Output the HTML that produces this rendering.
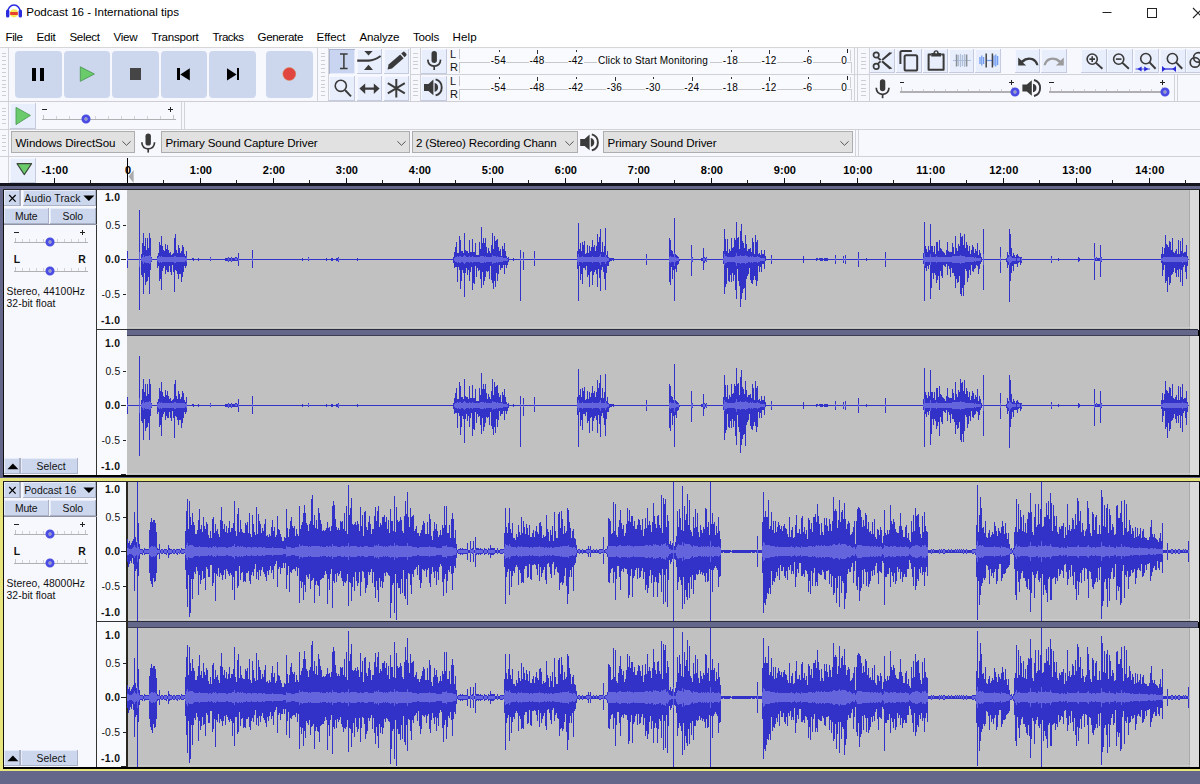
<!DOCTYPE html>
<html lang="en">
<head>
<meta charset="utf-8">
<title>Podcast 16 - International tips</title>
<style>
html,body{margin:0;padding:0;overflow:hidden}
body{width:1200px;height:784px;position:relative;overflow:hidden;background:#f7f8fd;
 font-family:"Liberation Sans",sans-serif;color:#000;font-size:12px}
.a{position:absolute}
.t{position:absolute;white-space:nowrap;line-height:1;transform-origin:0 0}
#title{left:0;top:0;width:1200px;height:26px;background:#fff}
#menu{left:0;top:26px;width:1200px;height:21px;background:#fff}
.hl{position:absolute;height:1px;background:#d2d3d8}
.vl{position:absolute;width:1px;background:#d2d3d8}
.grab{position:absolute;width:6px;
 background:repeating-linear-gradient(to bottom,#c9cacf 0,#c9cacf 1px,rgba(255,255,255,0) 1px,rgba(255,255,255,0) 3.85px)}
.big{position:absolute;top:50.5px;width:46.5px;height:47px;background:#ccd7ee;border-radius:4px}
.tool{position:absolute;width:25px;height:25px;background:#e8eefc;
 box-shadow:inset -1px -1px 0 #c4cbe0, inset 1px 1px 0 #f4f7ff}
.tool.sel{background:#c9d5f0;box-shadow:inset 1px 1px 0 #aab4d0, inset -1px -1px 0 #e4eafa}
.combo{position:absolute;top:131.3px;height:19.9px;background:#e1e1e1;border:1px solid #adadad;box-sizing:content-box}
.tbtn{position:absolute;background:#ccd7ee;box-shadow:inset -1px -1px 0 #aab2c8, inset 1px 1px 0 #e6ecfa}
svg{position:absolute;overflow:visible}
#app{position:absolute;left:0;top:0;width:1200px;height:784px;overflow:hidden}
</style>
</head>
<body>
<div id="app">
<div class="a" id="title"></div><div class="a" id="menu"></div>
<svg style="left:5px;top:3px" width="18" height="16" viewBox="0 0 18 16"><ellipse cx="9" cy="10.3" rx="4" ry="4.1" fill="#f6e85a"/>
<rect x="5.2" y="9" width="7.6" height="3" fill="#e8402c"/>
<path d="M2.6 9.5 A6.4 7.5 0 0 1 15.4 9.5" fill="none" stroke="#2b2be0" stroke-width="1.5"/>
<rect x="1" y="6.6" width="3.4" height="8" rx="1.6" fill="#2b2be0"/>
<rect x="13.6" y="6.6" width="3.4" height="8" rx="1.6" fill="#2b2be0"/></svg>
<span class="t" id="t1" style="left:26.2px;top:5.94px;font-size:11.6px;letter-spacing:-0.019px">Podcast 16 - International tips</span>
<svg style="left:1095px;top:0px" width="105" height="26" viewBox="0 0 105 26"><path d="M7.5 12.5H16.5" stroke="#222" stroke-width="1"/>
<rect x="52.5" y="8.5" width="9" height="9" fill="none" stroke="#222" stroke-width="1"/>
<path d="M98 8L108 18M108 8L98 18" stroke="#222" stroke-width="1.1"/></svg>
<span class="t" id="t2" style="left:5.5px;top:31.24px;font-size:11.6px;letter-spacing:-0.422px">File</span>
<span class="t" id="t3" style="left:36.5px;top:31.24px;font-size:11.6px;letter-spacing:-0.246px">Edit</span>
<span class="t" id="t4" style="left:69.5px;top:31.24px;font-size:11.6px;letter-spacing:-0.372px">Select</span>
<span class="t" id="t5" style="left:113.5px;top:31.24px;font-size:11.6px;letter-spacing:-0.28px">View</span>
<span class="t" id="t6" style="left:151.5px;top:31.24px;font-size:11.6px;letter-spacing:-0.243px">Transport</span>
<span class="t" id="t7" style="left:212.5px;top:31.24px;font-size:11.6px;letter-spacing:-0.56px">Tracks</span>
<span class="t" id="t8" style="left:257.5px;top:31.24px;font-size:11.6px;letter-spacing:-0.355px">Generate</span>
<span class="t" id="t9" style="left:316.5px;top:31.24px;font-size:11.6px;letter-spacing:-0.073px">Effect</span>
<span class="t" id="t10" style="left:359.5px;top:31.24px;font-size:11.6px;letter-spacing:-0.207px">Analyze</span>
<span class="t" id="t11" style="left:413px;top:31.24px;font-size:11.6px;letter-spacing:-0.216px">Tools</span>
<span class="t" id="t12" style="left:452.5px;top:31.24px;font-size:11.6px;letter-spacing:0.085px">Help</span>
<div class="hl" style="left:0;top:46.8px;width:1200px;height:1.3px;background:#d6d6d9"></div>
<div class="hl" style="left:0;top:100.8px;width:1200px;height:1.4px;background:#cfcfd3"></div>
<div class="hl" style="left:0;top:128.6px;width:1200px;height:1.3px;background:#d2d2d6"></div>
<div class="hl" style="left:0;top:155.7px;width:1200px;height:1.3px;background:#d2d2d6"></div>
<div class="hl" style="left:410px;top:74px;width:790px"></div>
<div class="a" style="left:2.3px;top:52.6px;width:4px;height:1px;background:#cdcdd2"></div>
<div class="a" style="left:2.3px;top:56.47px;width:4px;height:1px;background:#cdcdd2"></div>
<div class="a" style="left:2.3px;top:60.34px;width:4px;height:1px;background:#cdcdd2"></div>
<div class="a" style="left:2.3px;top:64.21px;width:4px;height:1px;background:#cdcdd2"></div>
<div class="a" style="left:2.3px;top:68.08px;width:4px;height:1px;background:#cdcdd2"></div>
<div class="a" style="left:2.3px;top:71.95px;width:4px;height:1px;background:#cdcdd2"></div>
<div class="a" style="left:2.3px;top:75.82px;width:4px;height:1px;background:#cdcdd2"></div>
<div class="a" style="left:2.3px;top:79.69px;width:4px;height:1px;background:#cdcdd2"></div>
<div class="a" style="left:2.3px;top:83.56px;width:4px;height:1px;background:#cdcdd2"></div>
<div class="a" style="left:2.3px;top:87.43px;width:4px;height:1px;background:#cdcdd2"></div>
<div class="a" style="left:2.3px;top:91.3px;width:4px;height:1px;background:#cdcdd2"></div>
<div class="a" style="left:2.3px;top:95.17px;width:4px;height:1px;background:#cdcdd2"></div>
<div class="vl" style="left:8px;top:47px;height:54px"></div>
<div class="big" style="left:15px"></div>
<div class="big" style="left:63.5px"></div>
<div class="big" style="left:112px"></div>
<div class="big" style="left:160.7px"></div>
<div class="big" style="left:209.3px"></div>
<div class="big" style="left:266px"></div>
<div class="a" style="left:32px;top:67.5px;width:4.4px;height:13px;background:#000"></div>
<div class="a" style="left:39.6px;top:67.5px;width:4.4px;height:13px;background:#000"></div>
<svg style="left:78px;top:64px" width="20" height="20" viewBox="0 0 20 20"><path d="M2.3 2.8L16.4 10L2.3 17.3Z" fill="#6acb6a" stroke="#4f9a58" stroke-width="0.9" stroke-linejoin="round"/></svg>
<div class="a" style="left:130px;top:68px;width:11.2px;height:11.6px;background:#454545"></div>
<div class="a" style="left:177.3px;top:68.2px;width:2.3px;height:12.2px;background:#000"></div>
<svg style="left:170px;top:64px" width="24" height="20" viewBox="0 0 24 20"><path d="M19.8 4.2V16.6L10.3 10.4Z" fill="#000"/></svg>
<div class="a" style="left:236.7px;top:68.2px;width:2.3px;height:12.2px;background:#000"></div>
<svg style="left:220px;top:64px" width="24" height="20" viewBox="0 0 24 20"><path d="M7 4.2V16.6L16.6 10.4Z" fill="#000"/></svg>
<svg style="left:280px;top:64px" width="20" height="20" viewBox="0 0 20 20"><circle cx="9.3" cy="10" r="6.5" fill="#e0463f" stroke="#d98f5a" stroke-width="0.5"/></svg>
<div class="vl" style="left:317px;top:47px;height:54px"></div>
<div class="a" style="left:320.5px;top:52.6px;width:4.6px;height:1px;background:#cdcdd2"></div>
<div class="a" style="left:320.5px;top:56.47px;width:4.6px;height:1px;background:#cdcdd2"></div>
<div class="a" style="left:320.5px;top:60.34px;width:4.6px;height:1px;background:#cdcdd2"></div>
<div class="a" style="left:320.5px;top:64.21px;width:4.6px;height:1px;background:#cdcdd2"></div>
<div class="a" style="left:320.5px;top:68.08px;width:4.6px;height:1px;background:#cdcdd2"></div>
<div class="a" style="left:320.5px;top:71.95px;width:4.6px;height:1px;background:#cdcdd2"></div>
<div class="a" style="left:320.5px;top:75.82px;width:4.6px;height:1px;background:#cdcdd2"></div>
<div class="a" style="left:320.5px;top:79.69px;width:4.6px;height:1px;background:#cdcdd2"></div>
<div class="a" style="left:320.5px;top:83.56px;width:4.6px;height:1px;background:#cdcdd2"></div>
<div class="a" style="left:320.5px;top:87.43px;width:4.6px;height:1px;background:#cdcdd2"></div>
<div class="a" style="left:320.5px;top:91.3px;width:4.6px;height:1px;background:#cdcdd2"></div>
<div class="a" style="left:320.5px;top:95.17px;width:4.6px;height:1px;background:#cdcdd2"></div>
<div class="vl" style="left:327.5px;top:47px;height:54px"></div>
<div class="tool sel" style="left:329.25px;top:48.5px;width:25.5px"></div>
<div class="tool" style="left:356.5px;top:48.5px;width:25.5px"></div>
<div class="tool" style="left:383.75px;top:48.5px;width:25.5px"></div>
<div class="tool" style="left:329.25px;top:75.5px;width:25.5px"></div>
<div class="tool" style="left:356.5px;top:75.5px;width:25.5px"></div>
<div class="tool" style="left:383.75px;top:75.5px;width:25.5px"></div>
<svg style="left:329px;top:48px" width="26" height="26" viewBox="0 0 26 26"><path d="M11 5.9H18.6M11 20.6H18.6M14.9 5.9V20.6" stroke="#3a3a3a" stroke-width="1.5" fill="none"/></svg>
<svg style="left:356px;top:48px" width="27" height="26" viewBox="0 0 27 26"><path d="M8.3 3H16.7L12.5 7.6Z M8 22H17L12.5 16.8Z" fill="#3a3a3a"/>
<path d="M1.2 12.6H12.5C17 12.6 20.5 11 24.6 8" stroke="#3a3a3a" stroke-width="2.1" fill="none"/></svg>
<svg style="left:383px;top:48px" width="27" height="26" viewBox="0 0 27 26"><path d="M4.6 21.6L5.6 16.6L17.2 6.4L20.6 10.2L9 20.6Z" fill="#3a3a3a"/>
<path d="M18.2 5.4L20 3.9Q21 3.2 21.9 4.2L23.3 5.8Q24 6.9 23.1 7.7L21.5 9.2Z" fill="#3a3a3a"/></svg>
<svg style="left:329px;top:75px" width="27" height="26" viewBox="0 0 27 26"><circle cx="11.8" cy="10.8" r="5.6" fill="none" stroke="#3a3a3a" stroke-width="1.6"/><path d="M16 15L22 21.4" stroke="#3a3a3a" stroke-width="1.9"/></svg>
<svg style="left:356px;top:75px" width="27" height="26" viewBox="0 0 27 26"><path d="M3.4 13.6L9.2 8.4V12.5H17.8V8.4L23.6 13.6L17.8 18.9V14.8H9.2V18.9Z" fill="#3a3a3a"/></svg>
<svg style="left:383px;top:75px" width="27" height="26" viewBox="0 0 27 26"><path d="M13.3 4V22.4M4.8 8.2L21.8 18.4M21.8 8.2L4.8 18.4" stroke="#3a3a3a" stroke-width="2" fill="none"/></svg>
<div class="vl" style="left:410px;top:47px;height:54px"></div>
<div class="a" style="left:413.4px;top:52.8px;width:4.6px;height:1px;background:#cdcdd2"></div>
<div class="a" style="left:413.4px;top:56.67px;width:4.6px;height:1px;background:#cdcdd2"></div>
<div class="a" style="left:413.4px;top:60.54px;width:4.6px;height:1px;background:#cdcdd2"></div>
<div class="a" style="left:413.4px;top:64.41px;width:4.6px;height:1px;background:#cdcdd2"></div>
<div class="a" style="left:413.4px;top:68.28px;width:4.6px;height:1px;background:#cdcdd2"></div>
<div class="vl" style="left:420px;top:47.5px;height:26px"></div>
<div class="tool" style="left:421px;top:48.5px;width:26.4px"></div>
<span class="t" id="t13" style="left:450px;top:48.97px;font-size:11px;color:#111">L</span>
<span class="t" id="t14" style="left:450px;top:62.07px;font-size:11px;color:#111">R</span>
<div class="a" style="left:458.5px;top:48.5px;width:391px;height:24.5px;background:#f9fafe"></div>
<div class="vl" style="left:458.5px;top:48.5px;height:10.5px;background:#c6c6ca"></div>
<div class="vl" style="left:458.5px;top:61.5px;height:11px;background:#c6c6ca"></div>
<div class="hl" style="left:458.5px;top:61.5px;width:392px;background:#c9c9cc"></div>
<div class="vl" style="left:849.5px;top:49.5px;height:11px;background:#d0d0d4"></div>
<div class="vl" style="left:851px;top:61.5px;height:11px;background:#d0d0d4"></div>
<div class="a" style="left:498.5px;top:49.5px;width:1px;height:2.6px;background:#333"></div>
<span class="t" id="t15" style="left:490.4px;top:55.96px;font-size:10px;background:#f9fafe;padding:0 0.4px;letter-spacing:0.255px">-54</span>
<div class="a" style="left:537.17px;top:49.5px;width:1px;height:4px;background:#333"></div>
<span class="t" id="t16" style="left:529.07px;top:55.96px;font-size:10px;background:#f9fafe;padding:0 0.4px;letter-spacing:0.255px">-48</span>
<div class="a" style="left:575.84px;top:49.5px;width:1px;height:2.6px;background:#333"></div>
<span class="t" id="t17" style="left:567.74px;top:55.96px;font-size:10px;background:#f9fafe;padding:0 0.4px;letter-spacing:0.255px">-42</span>
<div class="a" style="left:730.52px;top:49.5px;width:1px;height:2.6px;background:#333"></div>
<span class="t" id="t18" style="left:722.42px;top:55.96px;font-size:10px;background:#f9fafe;padding:0 0.4px;letter-spacing:0.255px">-18</span>
<div class="a" style="left:769.19px;top:49.5px;width:1px;height:4px;background:#333"></div>
<span class="t" id="t19" style="left:761.09px;top:55.96px;font-size:10px;background:#f9fafe;padding:0 0.4px;letter-spacing:0.255px">-12</span>
<div class="a" style="left:807.86px;top:49.5px;width:1px;height:2.6px;background:#333"></div>
<span class="t" id="t20" style="left:802.56px;top:55.96px;font-size:10px;background:#f9fafe;padding:0 0.4px;letter-spacing:0.356px">-6</span>
<div class="a" style="left:846.83px;top:48.8px;width:1.6px;height:4.6px;background:#222"></div>
<span class="t" id="t21" style="left:840.83px;top:55.96px;font-size:10px;background:#f9fafe;padding:0 0.4px">0</span>
<div class="a" style="left:413.4px;top:79.8px;width:4.6px;height:1px;background:#cdcdd2"></div>
<div class="a" style="left:413.4px;top:83.67px;width:4.6px;height:1px;background:#cdcdd2"></div>
<div class="a" style="left:413.4px;top:87.54px;width:4.6px;height:1px;background:#cdcdd2"></div>
<div class="a" style="left:413.4px;top:91.41px;width:4.6px;height:1px;background:#cdcdd2"></div>
<div class="a" style="left:413.4px;top:95.28px;width:4.6px;height:1px;background:#cdcdd2"></div>
<div class="vl" style="left:420px;top:74.5px;height:26px"></div>
<div class="tool" style="left:421px;top:75.5px;width:26.4px"></div>
<span class="t" id="t22" style="left:450px;top:75.97px;font-size:11px;color:#111">L</span>
<span class="t" id="t23" style="left:450px;top:89.07px;font-size:11px;color:#111">R</span>
<div class="a" style="left:458.5px;top:75.5px;width:391px;height:24.5px;background:#f9fafe"></div>
<div class="vl" style="left:458.5px;top:75.5px;height:10.5px;background:#c6c6ca"></div>
<div class="vl" style="left:458.5px;top:88.5px;height:11px;background:#c6c6ca"></div>
<div class="hl" style="left:458.5px;top:88.5px;width:392px;background:#c9c9cc"></div>
<div class="vl" style="left:849.5px;top:76.5px;height:11px;background:#d0d0d4"></div>
<div class="vl" style="left:851px;top:88.5px;height:11px;background:#d0d0d4"></div>
<div class="a" style="left:498.5px;top:76.5px;width:1px;height:2.6px;background:#333"></div>
<span class="t" id="t24" style="left:490.4px;top:82.96px;font-size:10px;background:#f9fafe;padding:0 0.4px;letter-spacing:0.255px">-54</span>
<div class="a" style="left:537.17px;top:76.5px;width:1px;height:4px;background:#333"></div>
<span class="t" id="t25" style="left:529.07px;top:82.96px;font-size:10px;background:#f9fafe;padding:0 0.4px;letter-spacing:0.255px">-48</span>
<div class="a" style="left:575.84px;top:76.5px;width:1px;height:2.6px;background:#333"></div>
<span class="t" id="t26" style="left:567.74px;top:82.96px;font-size:10px;background:#f9fafe;padding:0 0.4px;letter-spacing:0.255px">-42</span>
<div class="a" style="left:614.51px;top:76.5px;width:1px;height:4px;background:#333"></div>
<span class="t" id="t27" style="left:606.41px;top:82.96px;font-size:10px;background:#f9fafe;padding:0 0.4px;letter-spacing:0.255px">-36</span>
<div class="a" style="left:653.18px;top:76.5px;width:1px;height:2.6px;background:#333"></div>
<span class="t" id="t28" style="left:645.08px;top:82.96px;font-size:10px;background:#f9fafe;padding:0 0.4px;letter-spacing:0.255px">-30</span>
<div class="a" style="left:691.85px;top:76.5px;width:1px;height:4px;background:#333"></div>
<span class="t" id="t29" style="left:683.75px;top:82.96px;font-size:10px;background:#f9fafe;padding:0 0.4px;letter-spacing:0.255px">-24</span>
<div class="a" style="left:730.52px;top:76.5px;width:1px;height:2.6px;background:#333"></div>
<span class="t" id="t30" style="left:722.42px;top:82.96px;font-size:10px;background:#f9fafe;padding:0 0.4px;letter-spacing:0.255px">-18</span>
<div class="a" style="left:769.19px;top:76.5px;width:1px;height:4px;background:#333"></div>
<span class="t" id="t31" style="left:761.09px;top:82.96px;font-size:10px;background:#f9fafe;padding:0 0.4px;letter-spacing:0.255px">-12</span>
<div class="a" style="left:807.86px;top:76.5px;width:1px;height:2.6px;background:#333"></div>
<span class="t" id="t32" style="left:802.56px;top:82.96px;font-size:10px;background:#f9fafe;padding:0 0.4px;letter-spacing:0.356px">-6</span>
<div class="a" style="left:846.83px;top:75.8px;width:1.6px;height:4.6px;background:#222"></div>
<span class="t" id="t33" style="left:840.83px;top:82.96px;font-size:10px;background:#f9fafe;padding:0 0.4px">0</span>
<span class="t" id="t34" style="left:596.5px;top:56.16px;font-size:10px;background:#f9fafe;padding:0 1.5px;letter-spacing:0.154px">Click to Start Monitoring</span>
<svg style="left:421px;top:48px" width="27" height="26" viewBox="0 0 27 26"><rect x="10.5" y="3" width="5.4" height="12" rx="2.7" fill="#3a3a3a"/><path d="M6.8 11.6Q7.2 18 13.2 18.2Q19.2 18 19.6 11.6" fill="none" stroke="#3a3a3a" stroke-width="1.7"/><path d="M13.2 18V22" stroke="#3a3a3a" stroke-width="1.7"/></svg>
<svg style="left:421px;top:75px" width="27" height="26" viewBox="0 0 27 26"><path d="M3 8.9H7.4L12.4 4.6V20.2L7.4 15.9H3Z" fill="#3a3a3a"/><path d="M13.6 8.1A4.4 4.4 0 0 1 13.6 16.7Z" fill="#3a3a3a"/><path d="M14.6 4.4A8.3 8.3 0 0 1 14.6 20.4" fill="none" stroke="#3a3a3a" stroke-width="1.9"/></svg>
<div class="vl" style="left:854px;top:47px;height:54px"></div>
<div class="vl" style="left:857px;top:47px;height:54px"></div>
<div class="a" style="left:861.4px;top:52.8px;width:4.6px;height:1px;background:#cdcdd2"></div>
<div class="a" style="left:861.4px;top:56.67px;width:4.6px;height:1px;background:#cdcdd2"></div>
<div class="a" style="left:861.4px;top:60.54px;width:4.6px;height:1px;background:#cdcdd2"></div>
<div class="a" style="left:861.4px;top:64.41px;width:4.6px;height:1px;background:#cdcdd2"></div>
<div class="a" style="left:861.4px;top:68.28px;width:4.6px;height:1px;background:#cdcdd2"></div>
<div class="vl" style="left:868.5px;top:47px;height:27px"></div>
<div class="tool" style="left:870px;top:48.5px;width:25.4px;height:24.5px"></div>
<div class="tool" style="left:896.4px;top:48.5px;width:25.4px;height:24.5px"></div>
<div class="tool" style="left:922.6px;top:48.5px;width:25.4px;height:24.5px"></div>
<div class="tool" style="left:949px;top:48.5px;width:25.4px;height:24.5px"></div>
<div class="tool" style="left:975.2px;top:48.5px;width:25.4px;height:24.5px"></div>
<div class="tool" style="left:1015px;top:48.5px;width:25.4px;height:24.5px"></div>
<div class="tool" style="left:1041.2px;top:48.5px;width:25.4px;height:24.5px"></div>
<div class="tool" style="left:1081.2px;top:48.5px;width:25.4px;height:24.5px"></div>
<div class="tool" style="left:1107.4px;top:48.5px;width:25.4px;height:24.5px"></div>
<div class="tool" style="left:1134px;top:48.5px;width:25.4px;height:24.5px"></div>
<div class="tool" style="left:1160.2px;top:48.5px;width:25.4px;height:24.5px"></div>
<div class="tool" style="left:1186.4px;top:48.5px;width:25.4px;height:24.5px"></div>
<svg style="left:870px;top:48px" width="26" height="26" viewBox="0 0 26 26"><circle cx="6.2" cy="7" r="2.7" fill="none" stroke="#3a3a3a" stroke-width="1.7"/>
<circle cx="6.2" cy="18.4" r="2.7" fill="none" stroke="#3a3a3a" stroke-width="1.7"/>
<path d="M8.2 8.8L22.4 20.6L19.4 21.2L7.4 10.4Z M8.2 16.6L22.4 4.8L19.4 4.2L7.4 15Z" fill="#3a3a3a"/></svg>
<svg style="left:896px;top:48px" width="26" height="26" viewBox="0 0 26 26"><path d="M4.4 16V4.6Q4.4 3 6 3H15.8" fill="none" stroke="#3a3a3a" stroke-width="2"/>
<rect x="8.6" y="7.2" width="12.6" height="15.4" rx="1.6" fill="none" stroke="#3a3a3a" stroke-width="2"/></svg>
<svg style="left:922px;top:48px" width="26" height="26" viewBox="0 0 26 26"><path d="M9 6.6H6.6V21.8H21.6V6.6H19.2" fill="none" stroke="#3a3a3a" stroke-width="2" stroke-linejoin="round"/>
<path d="M9.2 8.6V5H11.4Q11.8 2.2 14.1 2.2Q16.4 2.2 16.8 5H19V8.6Z" fill="#3a3a3a"/><circle cx="14.1" cy="4.6" r="1" fill="#e8eefc"/></svg>
<svg style="left:949px;top:48px" width="26" height="26" viewBox="0 0 26 26"><path d="M4 12.5H22" stroke="#a9bfe0" stroke-width="1"/>
<path d="M9.5 7V18M11.5 6V19M13.5 7V18M15.5 6V19" stroke="#b0bfd8" stroke-width="1.2"/>
<path d="M7.6 6.6V18.6M17.6 6.6V18.6" stroke="#8a8f98" stroke-width="1.6"/></svg>
<svg style="left:975px;top:48px" width="26" height="26" viewBox="0 0 26 26"><path d="M5 9V16M6.8 7.5V17.5M8.6 9V16M19 7.5V17.5M20.8 6.5V18.5M22.6 8V17" stroke="#6f9cf0" stroke-width="1.3"/>
<path d="M12 12.5H17" stroke="#6f9cf0" stroke-width="1.2"/>
<path d="M11.2 5.6V19.4M17.4 5.6V19.4" stroke="#444" stroke-width="1.5"/></svg>
<svg style="left:1015px;top:48px" width="26" height="26" viewBox="0 0 26 26"><path d="M3.2 9.4V17.4H11.2L8 14.8Q12 10.6 17 12.2Q20.4 13.6 21.4 17.2H23.4Q22.4 11.8 17.6 10Q11.4 8 6.4 12.6Z" fill="#3a3a3a"/></svg>
<svg style="left:1041px;top:48px" width="26" height="26" viewBox="0 0 26 26"><path d="M22.8 9.4V17.4H14.8L18 14.8Q14 10.6 9 12.2Q5.6 13.6 4.6 17.2H2.6Q3.6 11.8 8.4 10Q14.6 8 19.6 12.6Z" fill="#9b9b9b"/></svg>
<svg style="left:1081px;top:48px" width="26" height="26" viewBox="0 0 26 26"><circle cx="11.2" cy="11.1" r="5.1" fill="none" stroke="#3a3a3a" stroke-width="1.6"/><path d="M14.974 14.874L21.4 20.8" stroke="#3a3a3a" stroke-width="2"/><path d="M8.4 11.1H14M11.2 8.3V13.9" stroke="#3a3a3a" stroke-width="1.6"/></svg>
<svg style="left:1107px;top:48px" width="26" height="26" viewBox="0 0 26 26"><circle cx="11.7" cy="11.1" r="5.1" fill="none" stroke="#3a3a3a" stroke-width="1.6"/><path d="M15.474 14.874L21.9 20.8" stroke="#3a3a3a" stroke-width="2"/><path d="M8.9 11.1H14.5" stroke="#3a3a3a" stroke-width="1.6"/></svg>
<svg style="left:1134px;top:48px" width="26" height="26" viewBox="0 0 26 26"><circle cx="11.8" cy="10.6" r="5.1" fill="none" stroke="#3a3a3a" stroke-width="1.6"/><path d="M15.574 14.374L21.6 20.8" stroke="#3a3a3a" stroke-width="2"/><path d="M3.4 21L7.6 18.4V23.6Z M14.4 21L10.2 18.4V23.6Z" fill="#2a2ad8"/><path d="M1.6 21H16" stroke="#2a2ad8" stroke-width="0.8"/></svg>
<svg style="left:1160px;top:48px" width="26" height="26" viewBox="0 0 26 26"><circle cx="12.4" cy="10.6" r="5.1" fill="none" stroke="#3a3a3a" stroke-width="1.6"/><path d="M16.174 14.374L22.2 20.8" stroke="#3a3a3a" stroke-width="2"/><path d="M2 18V24L5.6 21Z M16 18V24L12.4 21Z" fill="#2a2ad8"/><path d="M4 21H14" stroke="#2a2ad8" stroke-width="1.3"/></svg>
<svg style="left:1186px;top:48px" width="14" height="26" viewBox="0 0 14 26"><circle cx="12.4" cy="9.4" r="4.8" fill="none" stroke="#3a3a3a" stroke-width="1.7"/><circle cx="9" cy="14.4" r="4.8" fill="none" stroke="#3a3a3a" stroke-width="1.7"/></svg>
<div class="a" style="left:861.4px;top:79.8px;width:4.6px;height:1px;background:#cdcdd2"></div>
<div class="a" style="left:861.4px;top:83.67px;width:4.6px;height:1px;background:#cdcdd2"></div>
<div class="a" style="left:861.4px;top:87.54px;width:4.6px;height:1px;background:#cdcdd2"></div>
<div class="a" style="left:861.4px;top:91.41px;width:4.6px;height:1px;background:#cdcdd2"></div>
<div class="a" style="left:861.4px;top:95.28px;width:4.6px;height:1px;background:#cdcdd2"></div>
<div class="vl" style="left:868.5px;top:75px;height:26px"></div>
<svg style="left:869px;top:75px" width="27" height="26" viewBox="0 0 27 26"><rect x="10.9" y="4.2" width="5.4" height="12" rx="2.7" fill="#3a3a3a"/><path d="M7.2 12.8Q7.6 19.2 13.6 19.4Q19.6 19.2 20 12.8" fill="none" stroke="#3a3a3a" stroke-width="1.7"/><path d="M13.6 19.2V23.2" stroke="#3a3a3a" stroke-width="1.7"/></svg>
<div class="a" style="left:899.5px;top:91.4px;width:115.5px;height:1.4px;background:#b0b0b3"></div>
<div class="a" style="left:900.6px;top:87.1px;width:1px;height:4.2px;background:#c4c4c8"></div>
<div class="a" style="left:911.78px;top:88.9px;width:1px;height:2.4px;background:#d3d3d7"></div>
<div class="a" style="left:922.96px;top:88.9px;width:1px;height:2.4px;background:#d3d3d7"></div>
<div class="a" style="left:934.14px;top:88.9px;width:1px;height:2.4px;background:#d3d3d7"></div>
<div class="a" style="left:945.32px;top:88.9px;width:1px;height:2.4px;background:#d3d3d7"></div>
<div class="a" style="left:956.5px;top:88.9px;width:1px;height:2.4px;background:#d3d3d7"></div>
<div class="a" style="left:967.68px;top:88.9px;width:1px;height:2.4px;background:#d3d3d7"></div>
<div class="a" style="left:978.86px;top:88.9px;width:1px;height:2.4px;background:#d3d3d7"></div>
<div class="a" style="left:990.04px;top:88.9px;width:1px;height:2.4px;background:#d3d3d7"></div>
<div class="a" style="left:1001.22px;top:88.9px;width:1px;height:2.4px;background:#d3d3d7"></div>
<div class="a" style="left:1012.4px;top:87.1px;width:1px;height:4.2px;background:#c4c4c8"></div>
<div class="a" style="left:899.5px;top:81.6px;width:4.6px;height:1.1px;background:#222"></div>
<div class="a" style="left:1008.8px;top:81.6px;width:5px;height:1.1px;background:#222"></div>
<div class="a" style="left:1010.75px;top:79.6px;width:1.1px;height:5px;background:#222"></div>
<svg style="left:1008.8px;top:86px" width="12" height="12" viewBox="0 0 12 12"><circle cx="6" cy="6" r="3.1" fill="#b9bce0" stroke="#4a4ce4" stroke-width="2.9"/><circle cx="6" cy="6" r="1" fill="#8f93b0"/></svg>
<svg style="left:1019px;top:75px" width="27" height="26" viewBox="0 0 27 26"><path d="M3.4 9.5H7.8L12.8 5.2V20.8L7.8 16.5H3.4Z" fill="#3a3a3a"/><path d="M14 8.7A4.4 4.4 0 0 1 14 17.3Z" fill="#3a3a3a"/><path d="M15 5A8.3 8.3 0 0 1 15 21" fill="none" stroke="#3a3a3a" stroke-width="1.9"/></svg>
<div class="a" style="left:1049px;top:91.4px;width:116px;height:1.4px;background:#b0b0b3"></div>
<div class="a" style="left:1050.1px;top:87.1px;width:1px;height:4.2px;background:#c4c4c8"></div>
<div class="a" style="left:1061.33px;top:88.9px;width:1px;height:2.4px;background:#d3d3d7"></div>
<div class="a" style="left:1072.56px;top:88.9px;width:1px;height:2.4px;background:#d3d3d7"></div>
<div class="a" style="left:1083.79px;top:88.9px;width:1px;height:2.4px;background:#d3d3d7"></div>
<div class="a" style="left:1095.02px;top:88.9px;width:1px;height:2.4px;background:#d3d3d7"></div>
<div class="a" style="left:1106.25px;top:88.9px;width:1px;height:2.4px;background:#d3d3d7"></div>
<div class="a" style="left:1117.48px;top:88.9px;width:1px;height:2.4px;background:#d3d3d7"></div>
<div class="a" style="left:1128.71px;top:88.9px;width:1px;height:2.4px;background:#d3d3d7"></div>
<div class="a" style="left:1139.94px;top:88.9px;width:1px;height:2.4px;background:#d3d3d7"></div>
<div class="a" style="left:1151.17px;top:88.9px;width:1px;height:2.4px;background:#d3d3d7"></div>
<div class="a" style="left:1162.4px;top:87.1px;width:1px;height:4.2px;background:#c4c4c8"></div>
<div class="a" style="left:1049px;top:81.6px;width:4.6px;height:1.1px;background:#222"></div>
<div class="a" style="left:1159.8px;top:81.6px;width:5px;height:1.1px;background:#222"></div>
<div class="a" style="left:1161.75px;top:79.6px;width:1.1px;height:5px;background:#222"></div>
<svg style="left:1159.4px;top:86px" width="12" height="12" viewBox="0 0 12 12"><circle cx="6" cy="6" r="3.1" fill="#b9bce0" stroke="#4a4ce4" stroke-width="2.9"/><circle cx="6" cy="6" r="1" fill="#8f93b0"/></svg>
<div class="vl" style="left:1173.5px;top:75px;height:26px"></div>
<div class="vl" style="left:1176.5px;top:75px;height:26px"></div>
<div class="a" style="left:2.3px;top:107.6px;width:4px;height:1px;background:#cdcdd2"></div>
<div class="a" style="left:2.3px;top:111.47px;width:4px;height:1px;background:#cdcdd2"></div>
<div class="a" style="left:2.3px;top:115.34px;width:4px;height:1px;background:#cdcdd2"></div>
<div class="a" style="left:2.3px;top:119.21px;width:4px;height:1px;background:#cdcdd2"></div>
<div class="a" style="left:2.3px;top:123.08px;width:4px;height:1px;background:#cdcdd2"></div>
<div class="vl" style="left:8px;top:102px;height:27px"></div>
<div class="tool" style="left:10px;top:103px;width:26.4px;height:25.6px"></div>
<svg style="left:10px;top:103px" width="27" height="26" viewBox="0 0 27 26"><path d="M6 4.4L20.4 12.4L6 21.6Z" fill="#6acb6a" stroke="#4f9a58" stroke-width="0.9" stroke-linejoin="round"/></svg>
<div class="a" style="left:42px;top:118.8px;width:133.5px;height:1.4px;background:#b0b0b3"></div>
<div class="a" style="left:43.1px;top:114.5px;width:1px;height:4.2px;background:#c4c4c8"></div>
<div class="a" style="left:56.08px;top:116.3px;width:1px;height:2.4px;background:#d3d3d7"></div>
<div class="a" style="left:69.06px;top:116.3px;width:1px;height:2.4px;background:#d3d3d7"></div>
<div class="a" style="left:82.04px;top:116.3px;width:1px;height:2.4px;background:#d3d3d7"></div>
<div class="a" style="left:95.02px;top:116.3px;width:1px;height:2.4px;background:#d3d3d7"></div>
<div class="a" style="left:108px;top:116.3px;width:1px;height:2.4px;background:#d3d3d7"></div>
<div class="a" style="left:120.98px;top:116.3px;width:1px;height:2.4px;background:#d3d3d7"></div>
<div class="a" style="left:133.96px;top:116.3px;width:1px;height:2.4px;background:#d3d3d7"></div>
<div class="a" style="left:146.94px;top:116.3px;width:1px;height:2.4px;background:#d3d3d7"></div>
<div class="a" style="left:159.92px;top:116.3px;width:1px;height:2.4px;background:#d3d3d7"></div>
<div class="a" style="left:172.9px;top:114.5px;width:1px;height:4.2px;background:#c4c4c8"></div>
<div class="a" style="left:42px;top:109px;width:4.6px;height:1.1px;background:#222"></div>
<div class="a" style="left:167.9px;top:109px;width:5px;height:1.1px;background:#222"></div>
<div class="a" style="left:169.85px;top:107px;width:1.1px;height:5px;background:#222"></div>
<svg style="left:79.6px;top:113.4px" width="12" height="12" viewBox="0 0 12 12"><circle cx="6" cy="6" r="3.1" fill="#b9bce0" stroke="#4a4ce4" stroke-width="2.9"/><circle cx="6" cy="6" r="1" fill="#8f93b0"/></svg>
<div class="vl" style="left:181px;top:102px;height:27px"></div>
<div class="vl" style="left:184px;top:102px;height:27px"></div>
<div class="a" style="left:2.3px;top:134.6px;width:4px;height:1px;background:#cdcdd2"></div>
<div class="a" style="left:2.3px;top:138.47px;width:4px;height:1px;background:#cdcdd2"></div>
<div class="a" style="left:2.3px;top:142.34px;width:4px;height:1px;background:#cdcdd2"></div>
<div class="a" style="left:2.3px;top:146.21px;width:4px;height:1px;background:#cdcdd2"></div>
<div class="a" style="left:2.3px;top:150.08px;width:4px;height:1px;background:#cdcdd2"></div>
<div class="vl" style="left:8px;top:130px;height:26px"></div>
<div class="combo" style="left:11px;width:121.5px"></div>
<span class="t" id="t35" style="left:15.5px;top:137.14px;font-size:11.6px;letter-spacing:-0.069px">Windows DirectSou</span>
<svg style="left:120.5px;top:138px" width="12" height="12" viewBox="0 0 12 12"><path d="M1.4 3.3L5.5 7.3L9.6 3.3" fill="none" stroke="#555" stroke-width="1"/></svg>
<div class="combo" style="left:161px;width:246.5px"></div>
<span class="t" id="t36" style="left:165.5px;top:137.14px;font-size:11.6px;letter-spacing:-0.118px">Primary Sound Capture Driver</span>
<svg style="left:395.5px;top:138px" width="12" height="12" viewBox="0 0 12 12"><path d="M1.4 3.3L5.5 7.3L9.6 3.3" fill="none" stroke="#555" stroke-width="1"/></svg>
<div class="combo" style="left:412px;width:163.5px"></div>
<span class="t" id="t37" style="left:416px;top:137.14px;font-size:11.6px;letter-spacing:-0.174px">2 (Stereo) Recording Chann</span>
<svg style="left:563.5px;top:138px" width="12" height="12" viewBox="0 0 12 12"><path d="M1.4 3.3L5.5 7.3L9.6 3.3" fill="none" stroke="#555" stroke-width="1"/></svg>
<div class="combo" style="left:603px;width:247.5px"></div>
<span class="t" id="t38" style="left:607.5px;top:137.14px;font-size:11.6px;letter-spacing:-0.091px">Primary Sound Driver</span>
<svg style="left:838.5px;top:138px" width="12" height="12" viewBox="0 0 12 12"><path d="M1.4 3.3L5.5 7.3L9.6 3.3" fill="none" stroke="#555" stroke-width="1"/></svg>
<svg style="left:135px;top:130px" width="27" height="26" viewBox="0 0 27 26"><rect x="10.5" y="3.6" width="5.4" height="12" rx="2.7" fill="#3a3a3a"/><path d="M6.8 12.2Q7.2 18.6 13.2 18.8Q19.2 18.6 19.6 12.2" fill="none" stroke="#3a3a3a" stroke-width="1.7"/><path d="M13.2 18.6V22.6" stroke="#3a3a3a" stroke-width="1.7"/></svg>
<svg style="left:577px;top:130px" width="27" height="26" viewBox="0 0 27 26"><path d="M3.2 8.9H7.6L12.6 4.6V20.2L7.6 15.9H3.2Z" fill="#3a3a3a"/><path d="M13.8 8.1A4.4 4.4 0 0 1 13.8 16.7Z" fill="#3a3a3a"/><path d="M14.8 4.4A8.3 8.3 0 0 1 14.8 20.4" fill="none" stroke="#3a3a3a" stroke-width="1.9"/></svg>
<div class="vl" style="left:854.5px;top:130px;height:26px"></div>
<div class="vl" style="left:857.5px;top:130px;height:26px"></div>
<div class="vl" style="left:8px;top:157px;height:26px"></div>
<div class="tool" style="left:10px;top:157.5px;width:26.4px;height:25.5px"></div>
<svg style="left:10px;top:157px" width="27" height="26" viewBox="0 0 27 26"><path d="M7 6.6H21.6L14.3 17.6Z" fill="#6acb6a" stroke="#3c4a3c" stroke-width="1.1" stroke-linejoin="round"/></svg>
<div class="a" style="left:54px;top:178px;width:1px;height:5.5px;background:#111"></div>
<span class="t" id="t39" style="left:41.4px;top:165.17px;font-size:11px;font-weight:700;letter-spacing:0.263px">-1:00</span>
<div class="a" style="left:90.1px;top:180.4px;width:1px;height:3px;background:#222"></div>
<div class="a" style="left:126.6px;top:158px;width:1.7px;height:25.5px;background:#000"></div>
<svg style="left:128px;top:168px" width="7" height="16" viewBox="0 0 7 16"><path d="M0.6 8.4L5.6 2V15Z" fill="#aaaaad"/></svg>
<span class="t" id="t40" style="left:124.9px;top:165.17px;font-size:11px;font-weight:700;letter-spacing:0.275px">0</span>
<div class="a" style="left:163.1px;top:180.4px;width:1px;height:3px;background:#222"></div>
<div class="a" style="left:200px;top:178px;width:1px;height:5.5px;background:#111"></div>
<span class="t" id="t41" style="left:189.7px;top:165.17px;font-size:11px;font-weight:700;letter-spacing:0.092px">1:00</span>
<div class="a" style="left:236.1px;top:180.4px;width:1px;height:3px;background:#222"></div>
<div class="a" style="left:273px;top:178px;width:1px;height:5.5px;background:#111"></div>
<span class="t" id="t42" style="left:262.7px;top:165.17px;font-size:11px;font-weight:700;letter-spacing:0.092px">2:00</span>
<div class="a" style="left:309.1px;top:180.4px;width:1px;height:3px;background:#222"></div>
<div class="a" style="left:346px;top:178px;width:1px;height:5.5px;background:#111"></div>
<span class="t" id="t43" style="left:335.7px;top:165.17px;font-size:11px;font-weight:700;letter-spacing:0.092px">3:00</span>
<div class="a" style="left:382.1px;top:180.4px;width:1px;height:3px;background:#222"></div>
<div class="a" style="left:419px;top:178px;width:1px;height:5.5px;background:#111"></div>
<span class="t" id="t44" style="left:408.7px;top:165.17px;font-size:11px;font-weight:700;letter-spacing:0.092px">4:00</span>
<div class="a" style="left:455.1px;top:180.4px;width:1px;height:3px;background:#222"></div>
<div class="a" style="left:492px;top:178px;width:1px;height:5.5px;background:#111"></div>
<span class="t" id="t45" style="left:481.7px;top:165.17px;font-size:11px;font-weight:700;letter-spacing:0.092px">5:00</span>
<div class="a" style="left:528.1px;top:180.4px;width:1px;height:3px;background:#222"></div>
<div class="a" style="left:565px;top:178px;width:1px;height:5.5px;background:#111"></div>
<span class="t" id="t46" style="left:554.7px;top:165.17px;font-size:11px;font-weight:700;letter-spacing:0.092px">6:00</span>
<div class="a" style="left:601.1px;top:180.4px;width:1px;height:3px;background:#222"></div>
<div class="a" style="left:638px;top:178px;width:1px;height:5.5px;background:#111"></div>
<span class="t" id="t47" style="left:627.7px;top:165.17px;font-size:11px;font-weight:700;letter-spacing:0.092px">7:00</span>
<div class="a" style="left:674.1px;top:180.4px;width:1px;height:3px;background:#222"></div>
<div class="a" style="left:711px;top:178px;width:1px;height:5.5px;background:#111"></div>
<span class="t" id="t48" style="left:700.7px;top:165.17px;font-size:11px;font-weight:700;letter-spacing:0.092px">8:00</span>
<div class="a" style="left:747.1px;top:180.4px;width:1px;height:3px;background:#222"></div>
<div class="a" style="left:784px;top:178px;width:1px;height:5.5px;background:#111"></div>
<span class="t" id="t49" style="left:773.7px;top:165.17px;font-size:11px;font-weight:700;letter-spacing:0.092px">9:00</span>
<div class="a" style="left:820.1px;top:180.4px;width:1px;height:3px;background:#222"></div>
<div class="a" style="left:857px;top:178px;width:1px;height:5.5px;background:#111"></div>
<span class="t" id="t50" style="left:843.2px;top:165.17px;font-size:11px;font-weight:700;letter-spacing:0.252px">10:00</span>
<div class="a" style="left:893.1px;top:180.4px;width:1px;height:3px;background:#222"></div>
<div class="a" style="left:930px;top:178px;width:1px;height:5.5px;background:#111"></div>
<span class="t" id="t51" style="left:916.2px;top:165.17px;font-size:11px;font-weight:700;letter-spacing:0.374px">11:00</span>
<div class="a" style="left:966.1px;top:180.4px;width:1px;height:3px;background:#222"></div>
<div class="a" style="left:1003px;top:178px;width:1px;height:5.5px;background:#111"></div>
<span class="t" id="t52" style="left:989.2px;top:165.17px;font-size:11px;font-weight:700;letter-spacing:0.252px">12:00</span>
<div class="a" style="left:1039.1px;top:180.4px;width:1px;height:3px;background:#222"></div>
<div class="a" style="left:1076px;top:178px;width:1px;height:5.5px;background:#111"></div>
<span class="t" id="t53" style="left:1062.2px;top:165.17px;font-size:11px;font-weight:700;letter-spacing:0.252px">13:00</span>
<div class="a" style="left:1112.1px;top:180.4px;width:1px;height:3px;background:#222"></div>
<div class="a" style="left:1149px;top:178px;width:1px;height:5.5px;background:#111"></div>
<span class="t" id="t54" style="left:1135.2px;top:165.17px;font-size:11px;font-weight:700;letter-spacing:0.252px">14:00</span>
<div class="a" style="left:1185.1px;top:180.4px;width:1px;height:3px;background:#222"></div>
<div class="a" style="left:0px;top:183.4px;width:1200px;height:601px;background:#64678a"></div>
<div class="a" style="left:0px;top:183.3px;width:1200px;height:2.3px;background:#14141e"></div>
<div class="a" style="left:0px;top:478.2px;width:1200px;height:293.2px;background:#e8e57c"></div>
<div class="a" style="left:2.5px;top:189.5px;width:1.4px;height:287.5px;background:#111"></div>
<div class="a" style="left:2.5px;top:474.5px;width:1197.5px;height:2.5px;background:#000"></div>
<div class="a" style="left:1198.4px;top:189.5px;width:1.6px;height:287.5px;background:#000"></div>
<div class="a" style="left:3.5px;top:189.5px;width:94px;height:285.5px;background:#f7f8fd"></div>
<div class="a" style="left:97px;top:189.5px;width:31px;height:285.5px;background:#f9fafe"></div>
<div class="a" style="left:96.1px;top:189.5px;width:1px;height:285.5px;background:#333"></div>
<div class="a" style="left:126.5px;top:328.5px;width:1071.6px;height:8px;background:#64678a"></div>
<div class="a" style="left:126.5px;top:189.5px;width:1072px;height:140px;background:#dadada"></div>
<div class="a" style="left:126.5px;top:189.5px;width:1063.5px;height:140px;background:#c1c1c1"></div>
<div class="a" style="left:1189px;top:189.5px;width:1px;height:140px;background:#a9a9ab"></div>
<div class="a" style="left:126.5px;top:327.1px;width:1063px;height:1px;background:#cbcbcb"></div>
<div class="a" style="left:126.5px;top:335.5px;width:1072px;height:139.5px;background:#dadada"></div>
<div class="a" style="left:126.5px;top:335.5px;width:1063.5px;height:139.5px;background:#c1c1c1"></div>
<div class="a" style="left:1189px;top:335.5px;width:1px;height:139.5px;background:#a9a9ab"></div>
<div class="a" style="left:126.5px;top:472.6px;width:1063px;height:1px;background:#cbcbcb"></div>
<div class="a" style="left:2.5px;top:188.9px;width:1197.5px;height:1.1px;background:#26262c"></div>
<div class="a" style="left:97px;top:329.1px;width:29.5px;height:1px;background:#333"></div>
<div class="a" style="left:126.5px;top:329.3px;width:1071.6px;height:1px;background:#2c2d3c"></div>
<div class="a" style="left:126.5px;top:334.7px;width:1071.6px;height:0.9px;background:#3c3d52"></div>
<span class="t" id="t55" style="left:105px;top:192.61px;font-size:10.4px;font-weight:700;color:#111;letter-spacing:0.316px">1.0</span>
<span class="t" id="t56" style="left:105.4px;top:221.31px;font-size:10.4px;color:#111;letter-spacing:0.182px">0.5</span>
<span class="t" id="t57" style="left:105px;top:254.51px;font-size:10.4px;font-weight:700;color:#111;letter-spacing:0.316px">0.0</span>
<span class="t" id="t58" style="left:101.4px;top:290.01px;font-size:10.4px;color:#111;letter-spacing:0.273px">-0.5</span>
<span class="t" id="t59" style="left:101px;top:316.01px;font-size:10.4px;font-weight:700;color:#111;letter-spacing:0.373px">-1.0</span>
<div class="a" style="left:122.6px;top:224.5px;width:3.4px;height:1px;background:#222"></div>
<div class="a" style="left:121.4px;top:259.1px;width:4.8px;height:1px;background:#222"></div>
<div class="a" style="left:122.6px;top:293.5px;width:3.4px;height:1px;background:#222"></div>
<span class="t" id="t60" style="left:105px;top:338.61px;font-size:10.4px;font-weight:700;color:#111;letter-spacing:0.316px">1.0</span>
<span class="t" id="t61" style="left:105.4px;top:367.31px;font-size:10.4px;color:#111;letter-spacing:0.182px">0.5</span>
<span class="t" id="t62" style="left:105px;top:400.51px;font-size:10.4px;font-weight:700;color:#111;letter-spacing:0.316px">0.0</span>
<span class="t" id="t63" style="left:101.4px;top:436.01px;font-size:10.4px;color:#111;letter-spacing:0.273px">-0.5</span>
<span class="t" id="t64" style="left:101px;top:462.01px;font-size:10.4px;font-weight:700;color:#111;letter-spacing:0.373px">-1.0</span>
<div class="a" style="left:122.6px;top:370.5px;width:3.4px;height:1px;background:#222"></div>
<div class="a" style="left:121.4px;top:405.1px;width:4.8px;height:1px;background:#222"></div>
<div class="a" style="left:122.6px;top:439.5px;width:3.4px;height:1px;background:#222"></div>
<div class="a" style="left:121.4px;top:473.7px;width:4.8px;height:1px;background:#222"></div>
<div class="tbtn" style="left:3.5px;top:189.5px;width:16px;height:16px"></div>
<div class="a" style="left:20px;top:189.5px;width:1px;height:16.4px;background:#a9adbd"></div>
<div class="tbtn" style="left:22.5px;top:189.5px;width:73.5px;height:16px"></div>
<svg style="left:3.5px;top:189.5px" width="16" height="16" viewBox="0 0 16 16"><path d="M5.2 5L11.6 11.6M11.6 5L5.2 11.6" stroke="#000" stroke-width="1.2"/></svg>
<span class="t" id="t65" style="left:24.2px;top:194.01px;font-size:10.4px;color:#111;letter-spacing:0.148px">Audio Track</span>
<svg style="left:82px;top:189.5px" width="14" height="16" viewBox="0 0 14 16"><path d="M1.4 5.6H12.4L6.9 11Z" fill="#000"/></svg>
<div class="tbtn" style="left:3.5px;top:207.7px;width:45px;height:16px"></div>
<div class="tbtn" style="left:50px;top:207.7px;width:46px;height:16px"></div>
<span class="t" id="t66" style="left:15px;top:211.61px;font-size:10.4px;color:#111;letter-spacing:-0.177px">Mute</span>
<span class="t" id="t67" style="left:62.6px;top:211.61px;font-size:10.4px;color:#111;letter-spacing:-0.149px">Solo</span>
<div class="a" style="left:3.5px;top:223.9px;width:93px;height:1px;background:#8f93a3"></div>
<div class="a" style="left:14px;top:241.9px;width:74px;height:1.4px;background:#b0b0b3"></div>
<div class="a" style="left:15.1px;top:237.6px;width:1px;height:4.2px;background:#c4c4c8"></div>
<div class="a" style="left:22.13px;top:239.4px;width:1px;height:2.4px;background:#d3d3d7"></div>
<div class="a" style="left:29.16px;top:239.4px;width:1px;height:2.4px;background:#d3d3d7"></div>
<div class="a" style="left:36.19px;top:239.4px;width:1px;height:2.4px;background:#d3d3d7"></div>
<div class="a" style="left:43.22px;top:239.4px;width:1px;height:2.4px;background:#d3d3d7"></div>
<div class="a" style="left:50.25px;top:239.4px;width:1px;height:2.4px;background:#d3d3d7"></div>
<div class="a" style="left:57.28px;top:239.4px;width:1px;height:2.4px;background:#d3d3d7"></div>
<div class="a" style="left:64.31px;top:239.4px;width:1px;height:2.4px;background:#d3d3d7"></div>
<div class="a" style="left:71.34px;top:239.4px;width:1px;height:2.4px;background:#d3d3d7"></div>
<div class="a" style="left:78.37px;top:239.4px;width:1px;height:2.4px;background:#d3d3d7"></div>
<div class="a" style="left:85.4px;top:237.6px;width:1px;height:4.2px;background:#c4c4c8"></div>
<div class="a" style="left:14px;top:232.1px;width:4.6px;height:1.1px;background:#222"></div>
<div class="a" style="left:80px;top:232.1px;width:5px;height:1.1px;background:#222"></div>
<div class="a" style="left:81.95px;top:230.1px;width:1.1px;height:5px;background:#222"></div>
<svg style="left:44px;top:235.8px" width="12" height="12" viewBox="0 0 12 12"><circle cx="6" cy="6" r="3.1" fill="#b9bce0" stroke="#4a4ce4" stroke-width="2.9"/><circle cx="6" cy="6" r="1" fill="#8f93b0"/></svg>
<div class="a" style="left:14px;top:270.9px;width:74px;height:1.4px;background:#b0b0b3"></div>
<div class="a" style="left:15.1px;top:266.6px;width:1px;height:4.2px;background:#c4c4c8"></div>
<div class="a" style="left:22.13px;top:268.4px;width:1px;height:2.4px;background:#d3d3d7"></div>
<div class="a" style="left:29.16px;top:268.4px;width:1px;height:2.4px;background:#d3d3d7"></div>
<div class="a" style="left:36.19px;top:268.4px;width:1px;height:2.4px;background:#d3d3d7"></div>
<div class="a" style="left:43.22px;top:268.4px;width:1px;height:2.4px;background:#d3d3d7"></div>
<div class="a" style="left:50.25px;top:268.4px;width:1px;height:2.4px;background:#d3d3d7"></div>
<div class="a" style="left:57.28px;top:268.4px;width:1px;height:2.4px;background:#d3d3d7"></div>
<div class="a" style="left:64.31px;top:268.4px;width:1px;height:2.4px;background:#d3d3d7"></div>
<div class="a" style="left:71.34px;top:268.4px;width:1px;height:2.4px;background:#d3d3d7"></div>
<div class="a" style="left:78.37px;top:268.4px;width:1px;height:2.4px;background:#d3d3d7"></div>
<div class="a" style="left:85.4px;top:266.6px;width:1px;height:4.2px;background:#c4c4c8"></div>
<svg style="left:44px;top:264.6px" width="12" height="12" viewBox="0 0 12 12"><circle cx="6" cy="6" r="3.1" fill="#b9bce0" stroke="#4a4ce4" stroke-width="2.9"/><circle cx="6" cy="6" r="1" fill="#8f93b0"/></svg>
<span class="t" id="t68" style="left:13.8px;top:255.31px;font-size:10.4px;font-weight:700;color:#111">L</span>
<span class="t" id="t69" style="left:78.2px;top:255.31px;font-size:10.4px;font-weight:700;color:#111">R</span>
<span class="t" id="t70" style="left:6.5px;top:286.91px;font-size:10.4px;color:#111;letter-spacing:0.034px">Stereo, 44100Hz</span>
<span class="t" id="t71" style="left:6.5px;top:298.61px;font-size:10.4px;color:#111;letter-spacing:0.039px">32-bit float</span>
<div class="tbtn" style="left:3.5px;top:458.1px;width:16px;height:16px"></div>
<div class="a" style="left:20px;top:458.1px;width:1px;height:16.4px;background:#a9adbd"></div>
<div class="tbtn" style="left:21px;top:458.1px;width:56.5px;height:16px"></div>
<svg style="left:3.5px;top:458.1px" width="16" height="16" viewBox="0 0 16 16"><path d="M3.4 11.2H14.4L8.9 5.6Z" fill="#000"/></svg>
<span class="t" id="t72" style="left:36.6px;top:462.01px;font-size:10.4px;color:#111;letter-spacing:0.018px">Select</span>
<div class="a" style="left:2.5px;top:481.5px;width:1.4px;height:287.5px;background:#111"></div>
<div class="a" style="left:2.5px;top:766.5px;width:1197.5px;height:2.5px;background:#000"></div>
<div class="a" style="left:1198.4px;top:481.5px;width:1.6px;height:287.5px;background:#000"></div>
<div class="a" style="left:3.5px;top:481.5px;width:94px;height:285.5px;background:#f7f8fd"></div>
<div class="a" style="left:97px;top:481.5px;width:31px;height:285.5px;background:#f9fafe"></div>
<div class="a" style="left:96.1px;top:481.5px;width:1px;height:285.5px;background:#333"></div>
<div class="a" style="left:126.5px;top:620.5px;width:1071.6px;height:8px;background:#64678a"></div>
<div class="a" style="left:126.5px;top:481.5px;width:1072px;height:140px;background:#dadada"></div>
<div class="a" style="left:126.5px;top:481.5px;width:1063.5px;height:140px;background:#c1c1c1"></div>
<div class="a" style="left:1189px;top:481.5px;width:1px;height:140px;background:#a9a9ab"></div>
<div class="a" style="left:126.5px;top:619.1px;width:1063px;height:1px;background:#cbcbcb"></div>
<div class="a" style="left:126.5px;top:627.5px;width:1072px;height:139.5px;background:#dadada"></div>
<div class="a" style="left:126.5px;top:627.5px;width:1063.5px;height:139.5px;background:#c1c1c1"></div>
<div class="a" style="left:1189px;top:627.5px;width:1px;height:139.5px;background:#a9a9ab"></div>
<div class="a" style="left:126.5px;top:764.6px;width:1063px;height:1px;background:#cbcbcb"></div>
<div class="a" style="left:2.5px;top:480.9px;width:1197.5px;height:1.1px;background:#26262c"></div>
<div class="a" style="left:97px;top:621.1px;width:29.5px;height:1px;background:#333"></div>
<div class="a" style="left:126.5px;top:621.3px;width:1071.6px;height:1px;background:#2c2d3c"></div>
<div class="a" style="left:126.5px;top:626.7px;width:1071.6px;height:0.9px;background:#3c3d52"></div>
<div class="a" style="left:126.4px;top:481.5px;width:1.2px;height:285.5px;background:#2a2620"></div>
<span class="t" id="t73" style="left:105px;top:484.61px;font-size:10.4px;font-weight:700;color:#111;letter-spacing:0.316px">1.0</span>
<span class="t" id="t74" style="left:105.4px;top:513.31px;font-size:10.4px;color:#111;letter-spacing:0.182px">0.5</span>
<span class="t" id="t75" style="left:105px;top:546.51px;font-size:10.4px;font-weight:700;color:#111;letter-spacing:0.316px">0.0</span>
<span class="t" id="t76" style="left:101.4px;top:582.01px;font-size:10.4px;color:#111;letter-spacing:0.273px">-0.5</span>
<span class="t" id="t77" style="left:101px;top:608.01px;font-size:10.4px;font-weight:700;color:#111;letter-spacing:0.373px">-1.0</span>
<div class="a" style="left:122.6px;top:516.5px;width:3.4px;height:1px;background:#222"></div>
<div class="a" style="left:121.4px;top:551.1px;width:4.8px;height:1px;background:#222"></div>
<div class="a" style="left:122.6px;top:585.5px;width:3.4px;height:1px;background:#222"></div>
<span class="t" id="t78" style="left:105px;top:630.61px;font-size:10.4px;font-weight:700;color:#111;letter-spacing:0.316px">1.0</span>
<span class="t" id="t79" style="left:105.4px;top:659.31px;font-size:10.4px;color:#111;letter-spacing:0.182px">0.5</span>
<span class="t" id="t80" style="left:105px;top:692.51px;font-size:10.4px;font-weight:700;color:#111;letter-spacing:0.316px">0.0</span>
<span class="t" id="t81" style="left:101.4px;top:728.01px;font-size:10.4px;color:#111;letter-spacing:0.273px">-0.5</span>
<span class="t" id="t82" style="left:101px;top:754.01px;font-size:10.4px;font-weight:700;color:#111;letter-spacing:0.373px">-1.0</span>
<div class="a" style="left:122.6px;top:662.5px;width:3.4px;height:1px;background:#222"></div>
<div class="a" style="left:121.4px;top:697.1px;width:4.8px;height:1px;background:#222"></div>
<div class="a" style="left:122.6px;top:731.5px;width:3.4px;height:1px;background:#222"></div>
<div class="a" style="left:121.4px;top:765.7px;width:4.8px;height:1px;background:#222"></div>
<div class="tbtn" style="left:3.5px;top:481.5px;width:16px;height:16px"></div>
<div class="a" style="left:20px;top:481.5px;width:1px;height:16.4px;background:#a9adbd"></div>
<div class="tbtn" style="left:22.5px;top:481.5px;width:73.5px;height:16px"></div>
<svg style="left:3.5px;top:481.5px" width="16" height="16" viewBox="0 0 16 16"><path d="M5.2 5L11.6 11.6M11.6 5L5.2 11.6" stroke="#000" stroke-width="1.2"/></svg>
<span class="t" id="t83" style="left:24.2px;top:486.01px;font-size:10.4px;color:#111">Podcast 16</span>
<svg style="left:82px;top:481.5px" width="14" height="16" viewBox="0 0 14 16"><path d="M1.4 5.6H12.4L6.9 11Z" fill="#000"/></svg>
<div class="tbtn" style="left:3.5px;top:499.7px;width:45px;height:16px"></div>
<div class="tbtn" style="left:50px;top:499.7px;width:46px;height:16px"></div>
<span class="t" id="t84" style="left:15px;top:503.61px;font-size:10.4px;color:#111;letter-spacing:-0.177px">Mute</span>
<span class="t" id="t85" style="left:62.6px;top:503.61px;font-size:10.4px;color:#111;letter-spacing:-0.149px">Solo</span>
<div class="a" style="left:3.5px;top:515.9px;width:93px;height:1px;background:#8f93a3"></div>
<div class="a" style="left:14px;top:533.9px;width:74px;height:1.4px;background:#b0b0b3"></div>
<div class="a" style="left:15.1px;top:529.6px;width:1px;height:4.2px;background:#c4c4c8"></div>
<div class="a" style="left:22.13px;top:531.4px;width:1px;height:2.4px;background:#d3d3d7"></div>
<div class="a" style="left:29.16px;top:531.4px;width:1px;height:2.4px;background:#d3d3d7"></div>
<div class="a" style="left:36.19px;top:531.4px;width:1px;height:2.4px;background:#d3d3d7"></div>
<div class="a" style="left:43.22px;top:531.4px;width:1px;height:2.4px;background:#d3d3d7"></div>
<div class="a" style="left:50.25px;top:531.4px;width:1px;height:2.4px;background:#d3d3d7"></div>
<div class="a" style="left:57.28px;top:531.4px;width:1px;height:2.4px;background:#d3d3d7"></div>
<div class="a" style="left:64.31px;top:531.4px;width:1px;height:2.4px;background:#d3d3d7"></div>
<div class="a" style="left:71.34px;top:531.4px;width:1px;height:2.4px;background:#d3d3d7"></div>
<div class="a" style="left:78.37px;top:531.4px;width:1px;height:2.4px;background:#d3d3d7"></div>
<div class="a" style="left:85.4px;top:529.6px;width:1px;height:4.2px;background:#c4c4c8"></div>
<div class="a" style="left:14px;top:524.1px;width:4.6px;height:1.1px;background:#222"></div>
<div class="a" style="left:80px;top:524.1px;width:5px;height:1.1px;background:#222"></div>
<div class="a" style="left:81.95px;top:522.1px;width:1.1px;height:5px;background:#222"></div>
<svg style="left:44px;top:527.8px" width="12" height="12" viewBox="0 0 12 12"><circle cx="6" cy="6" r="3.1" fill="#b9bce0" stroke="#4a4ce4" stroke-width="2.9"/><circle cx="6" cy="6" r="1" fill="#8f93b0"/></svg>
<div class="a" style="left:14px;top:562.9px;width:74px;height:1.4px;background:#b0b0b3"></div>
<div class="a" style="left:15.1px;top:558.6px;width:1px;height:4.2px;background:#c4c4c8"></div>
<div class="a" style="left:22.13px;top:560.4px;width:1px;height:2.4px;background:#d3d3d7"></div>
<div class="a" style="left:29.16px;top:560.4px;width:1px;height:2.4px;background:#d3d3d7"></div>
<div class="a" style="left:36.19px;top:560.4px;width:1px;height:2.4px;background:#d3d3d7"></div>
<div class="a" style="left:43.22px;top:560.4px;width:1px;height:2.4px;background:#d3d3d7"></div>
<div class="a" style="left:50.25px;top:560.4px;width:1px;height:2.4px;background:#d3d3d7"></div>
<div class="a" style="left:57.28px;top:560.4px;width:1px;height:2.4px;background:#d3d3d7"></div>
<div class="a" style="left:64.31px;top:560.4px;width:1px;height:2.4px;background:#d3d3d7"></div>
<div class="a" style="left:71.34px;top:560.4px;width:1px;height:2.4px;background:#d3d3d7"></div>
<div class="a" style="left:78.37px;top:560.4px;width:1px;height:2.4px;background:#d3d3d7"></div>
<div class="a" style="left:85.4px;top:558.6px;width:1px;height:4.2px;background:#c4c4c8"></div>
<svg style="left:44px;top:556.6px" width="12" height="12" viewBox="0 0 12 12"><circle cx="6" cy="6" r="3.1" fill="#b9bce0" stroke="#4a4ce4" stroke-width="2.9"/><circle cx="6" cy="6" r="1" fill="#8f93b0"/></svg>
<span class="t" id="t86" style="left:13.8px;top:547.31px;font-size:10.4px;font-weight:700;color:#111">L</span>
<span class="t" id="t87" style="left:78.2px;top:547.31px;font-size:10.4px;font-weight:700;color:#111">R</span>
<span class="t" id="t88" style="left:6.5px;top:578.91px;font-size:10.4px;color:#111;letter-spacing:0.034px">Stereo, 48000Hz</span>
<span class="t" id="t89" style="left:6.5px;top:590.61px;font-size:10.4px;color:#111;letter-spacing:0.039px">32-bit float</span>
<div class="tbtn" style="left:3.5px;top:750.1px;width:16px;height:16px"></div>
<div class="a" style="left:20px;top:750.1px;width:1px;height:16.4px;background:#a9adbd"></div>
<div class="tbtn" style="left:21px;top:750.1px;width:56.5px;height:16px"></div>
<svg style="left:3.5px;top:750.1px" width="16" height="16" viewBox="0 0 16 16"><path d="M3.4 11.2H14.4L8.9 5.6Z" fill="#000"/></svg>
<span class="t" id="t90" style="left:36.6px;top:754.01px;font-size:10.4px;color:#111;letter-spacing:0.018px">Select</span>
<svg style="left:0;top:0" width="1200" height="784" viewBox="0 0 1200 784" shape-rendering="crispEdges"><path d="M127 259.5H1189" stroke="#3232c8" stroke-width="1" fill="none"/><path d="M127 251v17M139 210v100M141 254v21M142 243v34M143 233v61M144 246v27M145 238v47M146 250v32M147 238v43M148 248v29M149 233v61M150 238v32M151 257v5M157 256v12M158 253v13M159 242v39M160 245v34M161 236v54M162 246v25M163 250v18M164 251v15M165 244v30M166 249v21M167 245v27M168 250v22M169 253v13M170 252v20M171 255v20M172 254v11M173 253v19M174 238v54M175 234v36M176 250v21M177 253v21M178 245v34M179 248v26M180 253v21M181 251v31M182 245v32M183 247v25M184 254v12M185 256v12M186 251v15M192 258v2M193 258v3M198 258v3M210 257v4M225 258v3M226 258v3M227 258v3M228 257v5M229 258v3M230 258v3M231 257v5M232 258v3M233 258v3M234 258v3M235 257v4M236 257v4M237 258v3M238 253v13M252 250v18M302 258v3M308 257v4M326 258v3M331 258v3M332 258v3M336 258v3M337 258v3M338 257v5M357 258v3M453 257v6M454 252v16M455 247v20M456 242v25M457 253v29M458 253v14M459 236v34M460 240v49M461 251v30M462 251v19M463 253v20M464 233v64M465 250v23M466 251v17M467 251v24M468 253v17M469 240v41M470 252v20M471 252v15M472 239v51M473 252v31M474 252v32M475 243v23M476 255v22M477 255v13M478 255v16M479 242v28M480 249v30M481 227v61M482 243v29M483 238v47M484 243v38M485 238v39M486 247v24M487 253v19M488 248v23M489 251v28M490 253v13M491 245v35M492 233v50M493 249v40M494 236v45M495 241v46M496 240v33M497 239v42M498 247v27M499 251v14M500 249v21M501 256v12M502 246v22M503 249v16M504 243v31M505 251v14M506 256v12M507 258v7M508 257v5M513 258v3M520 250v51M523 252v18M534 251v15M577 251v18M578 223v78M579 249v17M580 243v37M581 251v23M582 242v42M583 245v23M584 241v27M585 254v16M586 253v13M587 245v32M588 253v22M589 246v41M590 251v21M591 247v24M592 240v45M593 247v28M594 245v27M595 251v19M596 246v28M597 234v53M598 242v27M599 237v41M600 229v62M601 252v18M602 242v25M603 252v20M604 246v33M605 228v62M606 255v18M607 251v15M608 257v9M609 258v4M610 258v3M611 258v3M612 258v2M613 258v3M646 254v11M669 238v44M670 240v45M671 250v17M672 251v28M673 254v16M674 218v83M675 254v15M676 255v17M677 256v9M678 257v7M679 259v2M691 245v31M692 257v5M701 258v3M702 258v3M703 248v22M704 257v6M705 258v3M706 257v5M723 251v13M724 229v65M725 239v48M726 251v33M727 239v29M728 253v28M729 249v33M730 251v24M731 238v44M732 248v25M733 247v34M734 238v37M735 240v50M736 222v77M737 238v31M738 237v44M739 249v37M740 231v76M741 224v75M742 241v52M743 243v46M744 248v40M745 235v65M746 244v35M747 251v25M748 249v25M749 249v19M750 248v32M751 252v31M752 238v46M753 242v38M754 254v22M755 235v45M756 242v44M757 240v41M758 254v12M759 253v19M760 255v12M761 250v22M762 254v10M763 254v10M764 250v19M765 256v5M771 255v9M803 256v7M816 258v3M817 258v2M819 258v2M820 258v3M821 258v3M822 258v3M824 258v3M825 258v3M826 258v3M827 258v3M835 255v9M843 256v7M845 255v9M858 252v15M866 258v3M885 252v15M923 253v11M924 222v79M925 246v22M926 249v22M927 252v14M928 246v23M929 250v15M930 224v75M931 246v42M932 246v27M933 252v27M934 246v27M935 254v21M936 242v41M937 242v38M938 251v25M939 240v50M940 248v23M941 249v27M942 251v27M943 252v13M944 253v13M945 255v12M946 250v14M947 242v33M948 251v15M949 252v17M950 252v25M951 252v16M952 243v30M953 247v26M954 254v22M955 236v52M956 248v31M957 251v32M958 244v38M959 246v30M960 233v61M961 237v59M962 236v52M963 245v51M964 234v51M965 248v21M966 242v29M967 245v37M968 251v27M969 246v24M970 254v21M971 250v15M972 245v26M973 247v25M974 253v16M975 249v19M976 251v14M977 243v23M978 255v19M979 250v19M980 253v11M981 257v5M983 229v61M1000 247v26M1006 258v4M1007 252v16M1008 255v10M1009 229v73M1010 234v47M1011 248v25M1012 256v10M1013 253v18M1014 255v9M1015 257v7M1016 255v9M1017 254v13M1018 256v7M1019 257v5M1020 257v8M1021 257v6M1051 256v7M1058 258v3M1078 257v5M1079 258v3M1094 243v37M1095 258v3M1096 257v4M1097 258v3M1098 258v3M1099 258v3M1100 245v32M1101 257v5M1161 254v9M1162 247v29M1163 254v16M1164 248v17M1165 235v48M1166 244v37M1167 245v47M1168 247v30M1169 241v44M1170 242v41M1171 250v25M1172 238v36M1173 252v20M1174 253v15M1175 251v22M1176 249v28M1177 254v16M1178 240v37M1179 254v15M1180 241v41M1181 251v19M1182 238v48M1183 253v14M1184 252v13M1185 252v20M1186 245v34M1187 256v10" stroke="#3232c8" stroke-width="1" fill="none" transform="translate(0.5 0)"/><path d="M127 258v3M139 252v15M141 258v3M142 257v5M143 255v9M144 257v5M145 256v7M146 256v7M147 256v7M148 256v7M149 255v9M150 256v7M151 258v3M157 258v3M158 257v5M159 256v7M160 257v5M161 256v7M162 257v5M163 257v5M164 257v5M165 257v5M166 257v5M167 257v5M168 257v5M169 257v5M170 257v5M171 257v5M172 257v5M173 257v5M174 256v7M175 256v7M176 257v5M177 257v5M178 257v5M179 257v5M180 257v5M181 257v5M182 257v5M183 257v5M184 257v5M185 258v3M186 257v5M210 258v2M228 258v3M231 258v3M235 258v2M236 258v2M238 258v3M252 258v3M308 258v2M338 258v3M454 258v3M455 257v5M456 257v5M457 256v7M458 257v5M459 256v7M460 256v7M461 257v5M462 257v5M463 256v7M464 255v9M465 256v7M466 257v5M467 257v5M468 257v5M469 256v7M470 257v5M471 257v5M472 256v7M473 257v5M474 257v5M475 257v5M476 257v5M477 257v5M478 257v5M479 257v5M480 256v7M481 256v7M482 256v7M483 256v7M484 257v5M485 256v7M486 257v5M487 257v5M488 257v5M489 257v5M490 257v5M491 257v5M492 255v9M493 256v7M494 256v7M495 256v7M496 257v5M497 256v7M498 257v5M499 257v5M500 257v5M501 257v5M502 257v5M503 258v3M504 258v3M505 258v3M506 258v3M507 259v2M520 258v3M523 258v3M534 258v3M577 257v5M578 254v11M579 257v5M580 257v5M581 257v5M582 256v7M583 257v5M584 257v5M585 257v5M586 257v5M587 257v5M588 257v5M589 257v5M590 257v5M591 257v5M592 256v7M593 257v5M594 257v5M595 257v5M596 257v5M597 257v5M598 257v5M599 256v7M600 254v11M601 257v5M602 257v5M603 257v5M604 257v5M605 255v9M606 257v5M607 258v3M608 258v3M646 258v3M669 257v5M670 256v7M671 257v5M672 257v5M673 257v5M674 253v13M675 257v5M676 258v3M677 258v3M678 258v3M691 257v5M692 258v3M703 258v3M704 258v3M706 258v3M723 258v3M724 254v11M725 256v7M726 256v7M727 257v5M728 257v5M729 257v5M730 257v5M731 257v5M732 257v5M733 257v5M734 257v5M735 256v7M736 253v13M737 256v7M738 256v7M739 256v7M740 255v9M741 256v7M742 256v7M743 256v7M744 256v7M745 255v9M746 256v7M747 256v7M748 257v5M749 257v5M750 256v7M751 257v5M752 256v7M753 257v5M754 257v5M755 257v5M756 257v5M757 256v7M758 257v5M759 257v5M760 258v3M761 258v3M762 258v3M763 258v3M764 258v3M771 258v3M835 258v3M843 258v3M845 258v3M858 258v3M885 258v3M923 258v3M924 253v13M925 257v5M926 257v5M927 257v5M928 257v5M929 257v5M930 254v11M931 257v5M932 257v5M933 257v5M934 257v5M935 257v5M936 256v7M937 257v5M938 257v5M939 257v5M940 257v5M941 257v5M942 257v5M943 257v5M944 257v5M945 257v5M946 257v5M947 257v5M948 257v5M949 257v5M950 257v5M951 257v5M952 256v7M953 256v7M954 256v7M955 256v7M956 256v7M957 256v7M958 256v7M959 256v7M960 255v9M961 256v7M962 256v7M963 256v7M964 256v7M965 257v5M966 257v5M967 257v5M968 257v5M969 257v5M970 257v5M971 257v5M972 257v5M973 257v5M974 258v3M975 257v5M976 258v3M977 258v3M978 258v3M979 258v3M980 258v3M983 254v11M1000 257v5M1007 258v3M1008 257v5M1009 254v11M1010 256v7M1011 257v5M1012 258v3M1013 258v3M1014 258v3M1015 258v3M1017 258v3M1018 258v3M1019 258v3M1021 258v3M1051 258v3M1094 257v5M1096 258v2M1100 257v5M1101 258v3M1161 258v3M1162 258v3M1163 257v5M1164 257v5M1165 257v5M1166 257v5M1167 257v5M1168 257v5M1169 257v5M1170 257v5M1171 257v5M1172 257v5M1173 257v5M1174 257v5M1175 257v5M1176 257v5M1177 257v5M1178 257v5M1179 257v5M1180 257v5M1181 257v5M1182 256v7M1183 257v5M1184 257v5M1185 257v5M1186 257v5M1187 258v3" stroke="#6464dc" stroke-width="1" fill="none" transform="translate(0.5 0)"/><path d="M127 405.5H1189" stroke="#3232c8" stroke-width="1" fill="none"/><path d="M127 397v17M139 356v100M141 400v21M142 389v34M143 379v61M144 392v27M145 384v47M146 396v32M147 384v43M148 394v29M149 379v61M150 384v32M151 403v5M157 402v12M158 399v13M159 388v39M160 391v34M161 382v54M162 392v25M163 396v18M164 397v15M165 390v30M166 395v21M167 391v27M168 396v22M169 399v13M170 398v20M171 401v20M172 400v11M173 399v19M174 384v54M175 380v36M176 396v21M177 399v21M178 391v34M179 394v26M180 399v21M181 397v31M182 391v32M183 393v25M184 400v12M185 402v12M186 397v15M192 404v2M193 404v3M198 404v3M210 403v4M225 404v3M226 404v3M227 404v3M228 403v5M229 404v3M230 404v3M231 403v5M232 404v3M233 404v3M234 404v3M235 403v4M236 403v4M237 404v3M238 399v13M252 396v18M302 404v3M308 403v4M326 404v3M331 404v3M332 404v3M336 404v3M337 404v3M338 403v5M357 404v3M453 403v6M454 398v16M455 393v20M456 388v25M457 399v29M458 399v14M459 382v34M460 386v49M461 397v30M462 397v19M463 399v20M464 379v64M465 396v23M466 397v17M467 397v24M468 399v17M469 386v41M470 398v20M471 398v15M472 385v51M473 398v31M474 398v32M475 389v23M476 401v22M477 401v13M478 401v16M479 388v28M480 395v30M481 373v61M482 389v29M483 384v47M484 389v38M485 384v39M486 393v24M487 399v19M488 394v23M489 397v28M490 399v13M491 391v35M492 379v50M493 395v40M494 382v45M495 387v46M496 386v33M497 385v42M498 393v27M499 397v14M500 395v21M501 402v12M502 392v22M503 395v16M504 389v31M505 397v14M506 402v12M507 404v7M508 403v5M513 404v3M520 396v51M523 398v18M534 397v15M577 397v18M578 369v78M579 395v17M580 389v37M581 397v23M582 388v42M583 391v23M584 387v27M585 400v16M586 399v13M587 391v32M588 399v22M589 392v41M590 397v21M591 393v24M592 386v45M593 393v28M594 391v27M595 397v19M596 392v28M597 380v53M598 388v27M599 383v41M600 375v62M601 398v18M602 388v25M603 398v20M604 392v33M605 374v62M606 401v18M607 397v15M608 403v9M609 404v4M610 404v3M611 404v3M612 404v2M613 404v3M646 400v11M669 384v44M670 386v45M671 396v17M672 397v28M673 400v16M674 364v83M675 400v15M676 401v17M677 402v9M678 403v7M679 405v2M691 391v31M692 403v5M701 404v3M702 404v3M703 394v22M704 403v6M705 404v3M706 403v5M723 397v13M724 375v65M725 385v48M726 397v33M727 385v29M728 399v28M729 395v33M730 397v24M731 384v44M732 394v25M733 393v34M734 384v37M735 386v50M736 368v77M737 384v31M738 383v44M739 395v37M740 377v76M741 370v75M742 387v52M743 389v46M744 394v40M745 381v65M746 390v35M747 397v25M748 395v25M749 395v19M750 394v32M751 398v31M752 384v46M753 388v38M754 400v22M755 381v45M756 388v44M757 386v41M758 400v12M759 399v19M760 401v12M761 396v22M762 400v10M763 400v10M764 396v19M765 402v5M771 401v9M803 402v7M816 404v3M817 404v2M819 404v2M820 404v3M821 404v3M822 404v3M824 404v3M825 404v3M826 404v3M827 404v3M835 401v9M843 402v7M845 401v9M858 398v15M866 404v3M885 398v15M923 399v11M924 368v79M925 392v22M926 395v22M927 398v14M928 392v23M929 396v15M930 370v75M931 392v42M932 392v27M933 398v27M934 392v27M935 400v21M936 388v41M937 388v38M938 397v25M939 386v50M940 394v23M941 395v27M942 397v27M943 398v13M944 399v13M945 401v12M946 396v14M947 388v33M948 397v15M949 398v17M950 398v25M951 398v16M952 389v30M953 393v26M954 400v22M955 382v52M956 394v31M957 397v32M958 390v38M959 392v30M960 379v61M961 383v59M962 382v52M963 391v51M964 380v51M965 394v21M966 388v29M967 391v37M968 397v27M969 392v24M970 400v21M971 396v15M972 391v26M973 393v25M974 399v16M975 395v19M976 397v14M977 389v23M978 401v19M979 396v19M980 399v11M981 403v5M983 375v61M1000 393v26M1006 404v4M1007 398v16M1008 401v10M1009 375v73M1010 380v47M1011 394v25M1012 402v10M1013 399v18M1014 401v9M1015 403v7M1016 401v9M1017 400v13M1018 402v7M1019 403v5M1020 403v8M1021 403v6M1051 402v7M1058 404v3M1078 403v5M1079 404v3M1094 389v37M1095 404v3M1096 403v4M1097 404v3M1098 404v3M1099 404v3M1100 391v32M1101 403v5M1161 400v9M1162 393v29M1163 400v16M1164 394v17M1165 381v48M1166 390v37M1167 391v47M1168 393v30M1169 387v44M1170 388v41M1171 396v25M1172 384v36M1173 398v20M1174 399v15M1175 397v22M1176 395v28M1177 400v16M1178 386v37M1179 400v15M1180 387v41M1181 397v19M1182 384v48M1183 399v14M1184 398v13M1185 398v20M1186 391v34M1187 402v10" stroke="#3232c8" stroke-width="1" fill="none" transform="translate(0.5 0)"/><path d="M127 404v3M139 398v15M141 404v3M142 403v5M143 401v9M144 403v5M145 402v7M146 402v7M147 402v7M148 402v7M149 401v9M150 402v7M151 404v3M157 404v3M158 403v5M159 402v7M160 403v5M161 402v7M162 403v5M163 403v5M164 403v5M165 403v5M166 403v5M167 403v5M168 403v5M169 403v5M170 403v5M171 403v5M172 403v5M173 403v5M174 402v7M175 402v7M176 403v5M177 403v5M178 403v5M179 403v5M180 403v5M181 403v5M182 403v5M183 403v5M184 403v5M185 404v3M186 403v5M210 404v2M228 404v3M231 404v3M235 404v2M236 404v2M238 404v3M252 404v3M308 404v2M338 404v3M454 404v3M455 403v5M456 403v5M457 402v7M458 403v5M459 402v7M460 402v7M461 403v5M462 403v5M463 402v7M464 401v9M465 402v7M466 403v5M467 403v5M468 403v5M469 402v7M470 403v5M471 403v5M472 402v7M473 403v5M474 403v5M475 403v5M476 403v5M477 403v5M478 403v5M479 403v5M480 402v7M481 402v7M482 402v7M483 402v7M484 403v5M485 402v7M486 403v5M487 403v5M488 403v5M489 403v5M490 403v5M491 403v5M492 401v9M493 402v7M494 402v7M495 402v7M496 403v5M497 402v7M498 403v5M499 403v5M500 403v5M501 403v5M502 403v5M503 404v3M504 404v3M505 404v3M506 404v3M507 405v2M520 404v3M523 404v3M534 404v3M577 403v5M578 400v11M579 403v5M580 403v5M581 403v5M582 402v7M583 403v5M584 403v5M585 403v5M586 403v5M587 403v5M588 403v5M589 403v5M590 403v5M591 403v5M592 402v7M593 403v5M594 403v5M595 403v5M596 403v5M597 403v5M598 403v5M599 402v7M600 400v11M601 403v5M602 403v5M603 403v5M604 403v5M605 401v9M606 403v5M607 404v3M608 404v3M646 404v3M669 403v5M670 402v7M671 403v5M672 403v5M673 403v5M674 399v13M675 403v5M676 404v3M677 404v3M678 404v3M691 403v5M692 404v3M703 404v3M704 404v3M706 404v3M723 404v3M724 400v11M725 402v7M726 402v7M727 403v5M728 403v5M729 403v5M730 403v5M731 403v5M732 403v5M733 403v5M734 403v5M735 402v7M736 399v13M737 402v7M738 402v7M739 402v7M740 401v9M741 402v7M742 402v7M743 402v7M744 402v7M745 401v9M746 402v7M747 402v7M748 403v5M749 403v5M750 402v7M751 403v5M752 402v7M753 403v5M754 403v5M755 403v5M756 403v5M757 402v7M758 403v5M759 403v5M760 404v3M761 404v3M762 404v3M763 404v3M764 404v3M771 404v3M835 404v3M843 404v3M845 404v3M858 404v3M885 404v3M923 404v3M924 399v13M925 403v5M926 403v5M927 403v5M928 403v5M929 403v5M930 400v11M931 403v5M932 403v5M933 403v5M934 403v5M935 403v5M936 402v7M937 403v5M938 403v5M939 403v5M940 403v5M941 403v5M942 403v5M943 403v5M944 403v5M945 403v5M946 403v5M947 403v5M948 403v5M949 403v5M950 403v5M951 403v5M952 402v7M953 402v7M954 402v7M955 402v7M956 402v7M957 402v7M958 402v7M959 402v7M960 401v9M961 402v7M962 402v7M963 402v7M964 402v7M965 403v5M966 403v5M967 403v5M968 403v5M969 403v5M970 403v5M971 403v5M972 403v5M973 403v5M974 404v3M975 403v5M976 404v3M977 404v3M978 404v3M979 404v3M980 404v3M983 400v11M1000 403v5M1007 404v3M1008 403v5M1009 400v11M1010 402v7M1011 403v5M1012 404v3M1013 404v3M1014 404v3M1015 404v3M1017 404v3M1018 404v3M1019 404v3M1021 404v3M1051 404v3M1094 403v5M1096 404v2M1100 403v5M1101 404v3M1161 404v3M1162 404v3M1163 403v5M1164 403v5M1165 403v5M1166 403v5M1167 403v5M1168 403v5M1169 403v5M1170 403v5M1171 403v5M1172 403v5M1173 403v5M1174 403v5M1175 403v5M1176 403v5M1177 403v5M1178 403v5M1179 403v5M1180 403v5M1181 403v5M1182 402v7M1183 403v5M1184 403v5M1185 403v5M1186 403v5M1187 404v3" stroke="#6464dc" stroke-width="1" fill="none" transform="translate(0.5 0)"/><path d="M127 551.5H1189" stroke="#3232c8" stroke-width="1" fill="none"/><path d="M127 539v23M128 543v24M129 541v23M130 545v16M131 543v20M132 541v17M133 539v25M134 512v79M135 537v34M136 542v27M137 482v139M138 523v53M139 544v15M140 549v5M141 549v5M142 549v6M143 550v3M144 548v7M145 549v5M146 549v5M147 549v5M148 549v5M149 530v43M150 522v59M151 518v66M152 522v65M153 520v58M154 520v62M155 523v58M156 532v41M157 548v7M158 549v5M159 544v15M160 550v3M161 549v5M162 549v5M163 550v3M164 549v5M165 549v5M166 549v6M167 550v3M168 545v13M169 548v7M170 549v5M171 549v5M172 550v3M173 549v5M174 549v5M175 550v3M176 549v5M177 549v6M178 549v4M179 549v5M180 550v3M181 548v6M182 549v5M183 549v5M184 549v4M185 531v39M186 511v78M187 499v108M188 529v46M189 501v116M190 517v96M191 525v54M192 513v86M193 522v57M194 525v47M195 534v40M196 534v33M197 530v41M198 520v75M199 509v66M200 529v55M201 525v55M202 532v39M203 517v62M204 526v52M205 529v61M206 522v45M207 524v45M208 535v42M209 538v39M210 531v34M211 538v27M212 519v67M213 517v66M214 533v40M215 524v77M216 531v43M217 529v47M218 534v34M219 537v40M220 520v53M221 507v68M222 521v59M223 529v46M224 524v46M225 532v47M226 526v43M227 533v38M228 528v46M229 521v55M230 532v41M231 528v47M232 528v62M233 523v54M234 501v99M235 531v40M236 536v35M237 514v74M238 508v78M239 532v34M240 520v60M241 529v44M242 532v40M243 533v49M244 533v48M245 523v59M246 525v48M247 522v51M248 533v38M249 513v68M250 534v50M251 537v38M252 515v57M253 524v52M254 532v37M255 535v29M256 507v72M257 534v38M258 514v66M259 521v49M260 524v52M261 533v37M262 528v39M263 531v41M264 524v50M265 519v58M266 536v45M267 535v36M268 537v38M269 534v36M270 536v30M271 527v46M272 520v50M273 531v48M274 527v39M275 537v27M276 535v26M277 516v71M278 529v40M279 530v37M280 534v40M281 537v31M282 541v27M283 541v22M284 537v31M285 538v25M286 509v80M287 528v47M288 537v29M289 529v63M290 521v51M291 517v56M292 526v44M293 528v41M294 526v43M295 536v35M296 529v38M297 534v42M298 536v32M299 506v97M300 529v52M301 525v63M302 522v60M303 513v87M304 505v80M305 513v79M306 523v52M307 525v52M308 531v48M309 524v50M310 521v68M311 499v82M312 495v85M313 525v53M314 515v88M315 528v57M316 520v61M317 529v56M318 508v78M319 513v83M320 520v60M321 524v55M322 531v47M323 530v48M324 531v44M325 530v41M326 528v46M327 522v82M328 528v51M329 527v63M330 531v43M331 526v43M332 506v102M333 501v80M334 505v78M335 519v55M336 527v55M337 530v43M338 528v48M339 530v44M340 521v50M341 522v56M342 521v60M343 529v57M344 513v69M345 531v52M346 506v75M347 534v40M348 485v121M349 515v67M350 508v75M351 498v103M352 524v63M353 525v52M354 524v67M355 522v50M356 525v56M357 521v65M358 524v59M359 531v41M360 507v89M361 526v56M362 515v56M363 536v36M364 512v66M365 511v82M366 527v61M367 530v55M368 522v50M369 516v59M370 524v48M371 534v35M372 529v54M373 529v43M374 516v71M375 507v91M376 521v60M377 511v79M378 506v96M379 527v51M380 523v64M381 525v56M382 517v71M383 517v65M384 515v58M385 522v54M386 517v55M387 529v44M388 520v55M389 533v43M390 509v109M391 521v82M392 521v64M393 531v52M394 496v117M395 532v42M396 507v113M397 520v63M398 522v66M399 521v67M400 517v77M401 520v59M402 531v62M403 533v37M404 516v80M405 501v98M406 514v65M407 492v113M408 517v56M409 527v47M410 508v77M411 517v77M412 516v58M413 515v62M414 531v39M415 529v40M416 526v41M417 533v42M418 533v32M419 536v44M420 533v55M421 530v53M422 525v44M423 521v49M424 523v48M425 534v35M426 534v43M427 522v48M428 534v34M429 514v69M430 519v68M431 536v38M432 540v27M433 531v41M434 522v56M435 529v42M436 524v61M437 531v41M438 537v43M439 535v32M440 530v34M441 535v31M442 525v57M443 528v68M444 506v73M445 525v49M446 506v87M447 533v48M448 533v37M449 525v47M450 538v28M451 519v55M452 513v77M453 519v54M454 538v28M455 530v38M456 544v14M457 550v3M458 549v5M459 549v5M460 548v7M461 549v5M462 548v7M463 549v5M464 549v5M465 549v5M466 549v5M467 543v17M468 550v3M469 550v3M470 541v21M471 549v4M472 548v6M473 541v21M474 550v3M475 537v30M476 548v7M477 548v6M478 548v7M479 549v5M480 548v7M481 549v5M482 549v5M483 550v3M484 548v7M485 549v5M486 549v5M487 550v3M488 548v7M489 549v5M490 545v13M491 548v7M492 548v7M493 548v7M494 548v6M495 550v3M496 550v3M497 548v6M498 550v3M499 550v3M500 549v5M501 549v5M502 549v5M503 549v4M504 533v34M505 508v96M506 527v50M507 533v39M508 523v46M509 508v87M510 529v42M511 533v54M512 523v53M513 538v33M514 538v35M515 540v27M516 534v31M517 537v30M518 525v60M519 532v38M520 535v38M521 517v66M522 533v49M523 521v62M524 527v42M525 534v32M526 524v42M527 528v50M528 535v42M529 525v39M530 537v42M531 537v43M532 533v32M533 530v35M534 537v27M535 531v34M536 526v43M537 532v43M538 534v30M539 523v58M540 522v45M541 526v51M542 538v35M543 535v35M544 537v30M545 536v44M546 515v69M547 529v35M548 532v31M549 541v26M550 530v44M551 535v43M552 526v38M553 541v21M554 512v63M555 531v38M556 538v29M557 538v34M558 514v59M559 512v78M560 528v55M561 511v71M562 519v66M563 534v49M564 526v50M565 533v35M566 531v55M567 508v96M568 510v84M569 522v55M570 528v42M571 538v39M572 531v36M573 529v62M574 538v27M575 539v24M576 545v12M577 550v3M578 549v4M579 549v5M580 550v3M581 550v3M582 549v5M583 550v3M584 550v3M585 550v3M586 549v4M587 549v5M588 546v11M589 549v4M590 546v11M591 550v3M592 550v3M593 549v4M594 550v3M595 550v3M596 549v4M597 550v3M598 550v3M599 549v5M600 549v5M601 549v4M602 549v4M603 537v27M604 550v3M605 549v4M606 549v5M607 546v11M608 518v64M609 519v64M610 521v52M611 534v35M612 533v35M613 502v81M614 531v41M615 504v96M616 535v44M617 537v29M618 527v39M619 520v57M620 510v80M621 523v48M622 529v40M623 525v47M624 536v32M625 533v36M626 524v45M627 508v66M628 521v77M629 510v85M630 522v54M631 516v53M632 516v81M633 526v52M634 521v55M635 529v41M636 529v39M637 525v54M638 519v49M639 520v58M640 525v52M641 530v41M642 519v49M643 536v43M644 529v43M645 518v72M646 528v57M647 508v85M648 525v63M649 521v55M650 525v45M651 532v51M652 522v53M653 503v94M654 516v66M655 524v53M656 528v54M657 516v81M658 515v68M659 525v48M660 528v47M661 495v97M662 533v36M663 498v106M664 504v71M665 499v103M666 527v42M667 515v92M668 521v59M669 544v16M670 541v23M671 545v17M672 543v16M673 482v139M674 546v13M675 542v18M676 536v31M677 511v79M678 527v55M679 509v68M680 518v62M681 530v55M682 486v123M683 531v46M684 506v98M685 520v70M686 514v83M687 494v106M688 525v58M689 500v98M690 530v47M691 532v57M692 536v39M693 517v77M694 528v52M695 509v71M696 527v47M697 513v62M698 532v42M699 537v33M700 525v49M701 530v42M702 533v42M703 527v46M704 529v47M705 508v74M706 509v64M707 527v55M708 522v59M709 535v34M710 482v139M711 524v46M712 513v79M713 524v46M714 522v46M715 535v31M716 526v42M717 533v37M718 517v70M719 531v46M720 539v37M721 550v3M722 550v3M723 550v2M724 550v3M725 550v3M726 550v3M727 550v3M728 550v3M729 550v3M730 550v2M732 550v3M733 550v3M734 550v3M735 550v3M736 550v3M737 550v3M738 550v3M739 550v3M740 550v3M741 550v3M742 550v3M743 550v3M744 550v3M745 550v3M746 550v3M747 550v3M748 550v3M749 550v3M750 550v3M751 550v2M752 550v3M753 550v3M754 550v3M755 550v2M756 550v3M757 536v31M758 550v3M759 550v3M760 550v3M761 550v3M762 522v51M763 492v121M764 517v86M765 511v94M766 517v82M767 517v76M768 500v94M769 529v59M770 526v68M771 512v59M772 530v55M773 521v60M774 533v49M775 521v57M776 532v40M777 527v49M778 522v46M779 525v55M780 529v36M781 526v45M782 531v40M783 526v41M784 524v52M785 528v50M786 529v42M787 534v46M788 537v30M789 517v53M790 537v28M791 530v44M792 527v44M793 538v36M794 537v25M795 525v62M796 515v62M797 533v36M798 533v40M799 529v34M800 534v29M801 518v58M802 516v60M803 532v42M804 527v50M805 534v36M806 530v41M807 539v35M808 518v74M809 520v61M810 529v65M811 523v48M812 532v54M813 517v56M814 517v51M815 514v72M816 522v60M817 504v82M818 516v57M819 524v50M820 535v40M821 523v52M822 532v38M823 535v37M824 518v61M825 525v55M826 518v53M827 526v45M828 531v39M829 519v65M830 524v50M831 531v56M832 521v55M833 497v98M834 511v82M835 509v69M836 511v92M837 528v60M838 520v56M839 500v107M840 522v54M841 512v81M842 510v71M843 519v64M844 503v106M845 519v80M846 529v64M847 524v50M848 521v48M849 523v49M850 535v37M851 534v33M852 532v31M853 527v56M854 521v50M855 544v17M856 521v65M857 509v81M858 507v70M859 508v93M860 510v81M861 517v71M862 527v43M863 520v64M864 526v43M865 513v59M866 515v71M867 529v43M868 522v65M869 532v52M870 531v50M871 534v37M872 522v54M873 534v36M874 519v56M875 537v29M876 539v24M877 529v44M878 530v54M879 535v36M880 527v45M881 530v43M882 543v18M883 536v27M884 510v95M885 533v44M886 535v42M887 530v44M888 534v40M889 530v38M890 505v82M891 521v51M892 524v52M893 519v63M894 522v51M895 529v55M896 532v49M897 533v34M898 533v39M899 526v43M900 513v66M901 526v46M902 530v52M903 537v40M904 537v37M905 527v50M906 525v52M907 538v31M908 533v36M909 540v20M910 542v21M911 521v48M912 532v45M913 515v71M914 531v36M915 508v82M916 516v70M917 515v64M918 514v67M919 527v42M920 534v39M921 538v29M922 516v59M923 532v40M924 512v74M925 526v46M926 531v36M927 532v44M928 550v3M929 550v3M930 550v3M931 549v5M932 550v3M933 549v4M934 550v3M935 550v3M936 550v3M937 550v3M938 550v3M939 549v5M940 550v3M941 549v4M942 550v3M943 549v5M944 549v5M945 550v3M946 550v3M947 550v3M948 549v4M949 550v3M950 550v3M951 549v4M952 550v3M953 550v3M954 550v3M955 549v4M956 550v3M957 549v4M958 550v3M959 549v4M960 550v3M961 549v4M962 550v3M963 549v5M964 550v3M965 550v3M966 549v5M967 550v3M968 550v3M969 550v3M970 550v3M971 550v3M972 549v5M973 549v5M974 549v4M975 549v6M976 525v52M977 485v135M978 532v49M979 515v90M980 497v98M981 508v78M982 528v55M983 527v51M984 533v47M985 521v57M986 537v28M987 538v28M988 533v37M989 530v54M990 537v32M991 535v41M992 532v41M993 534v44M994 522v50M995 526v43M996 531v53M997 536v45M998 528v41M999 531v33M1000 533v31M1001 527v54M1002 521v57M1003 526v48M1004 534v40M1005 523v50M1006 533v36M1007 539v29M1008 533v34M1009 544v21M1010 549v5M1011 548v6M1012 550v3M1013 548v7M1014 532v37M1015 527v68M1016 499v101M1017 532v39M1018 504v78M1019 529v63M1020 510v69M1021 517v56M1022 531v40M1023 515v63M1024 532v46M1025 523v58M1026 533v54M1027 519v70M1028 512v67M1029 513v77M1030 493v119M1031 512v81M1032 532v40M1033 535v40M1034 517v81M1035 504v74M1036 527v47M1037 525v46M1038 504v76M1039 524v58M1040 509v69M1041 482v139M1042 527v47M1043 526v69M1044 517v68M1045 517v73M1046 503v90M1047 515v87M1048 501v78M1049 519v58M1050 493v107M1051 503v97M1052 531v48M1053 505v73M1054 516v61M1055 526v58M1056 516v62M1057 532v49M1058 534v35M1059 527v49M1060 529v45M1061 526v44M1062 526v45M1063 523v55M1064 538v27M1065 527v37M1066 535v37M1067 504v81M1068 530v49M1069 525v45M1070 531v46M1071 529v36M1072 518v58M1073 520v65M1074 529v43M1075 514v75M1076 525v75M1077 498v83M1078 501v94M1079 521v61M1080 511v62M1081 532v51M1082 523v47M1083 530v38M1084 536v45M1085 531v37M1086 529v40M1087 501v78M1088 508v90M1089 524v47M1090 533v39M1091 536v43M1092 512v75M1093 514v75M1094 530v54M1095 517v65M1096 515v63M1097 534v48M1098 534v34M1099 525v55M1100 534v33M1101 490v129M1102 497v109M1103 526v75M1104 505v77M1105 527v52M1106 508v81M1107 504v103M1108 533v45M1109 509v92M1110 515v64M1111 530v42M1112 524v44M1113 527v52M1114 535v42M1115 534v30M1116 506v94M1117 505v81M1118 518v73M1119 518v69M1120 513v92M1121 501v102M1122 522v49M1123 535v30M1124 500v98M1125 528v47M1126 504v73M1127 532v39M1128 531v58M1129 520v57M1130 525v51M1131 534v36M1132 528v45M1133 531v41M1134 538v31M1135 527v57M1136 537v41M1137 528v42M1138 536v32M1139 534v36M1140 528v43M1141 538v26M1142 531v46M1143 529v47M1144 537v36M1145 538v27M1146 538v32M1147 540v24M1148 540v24M1149 537v26M1150 527v54M1151 520v56M1152 534v38M1153 537v31M1154 534v32M1155 538v32M1156 539v31M1157 540v21M1158 542v26M1159 538v32M1160 533v29M1161 541v21M1162 523v50M1163 550v3M1164 550v3M1165 550v3M1166 550v3M1167 543v17M1168 550v3M1169 550v3M1170 550v3M1171 549v5M1172 549v5M1173 550v3M1174 550v3M1175 549v5M1176 550v3M1177 550v3M1178 549v5M1179 549v5M1180 550v3M1181 550v3M1182 550v3M1183 549v4M1184 550v3M1185 549v4M1186 550v3M1187 550v3M1188 541v21" stroke="#3232c8" stroke-width="1" fill="none" transform="translate(0.5 0)"/><path d="M127 548v7M128 548v7M129 549v5M130 549v5M131 549v5M132 548v7M133 547v9M134 545v13M135 547v9M136 548v7M137 541v21M138 547v9M139 549v5M140 550v3M141 550v3M142 550v3M144 550v3M145 550v3M146 550v3M147 550v3M148 550v3M149 548v7M150 547v9M151 546v11M152 546v11M153 547v9M154 546v11M155 547v9M156 548v7M157 550v3M158 550v3M159 550v3M161 550v3M162 550v3M164 550v3M165 550v3M166 550v3M168 550v3M169 550v3M170 550v3M171 550v3M173 550v3M174 550v3M176 550v3M177 550v3M178 550v2M179 550v3M181 550v3M182 550v3M183 550v3M184 550v2M185 548v7M186 545v13M187 543v17M188 546v11M189 545v13M190 545v13M191 545v13M192 545v13M193 546v11M194 547v9M195 547v9M196 547v9M197 547v9M198 547v9M199 546v11M200 547v9M201 547v9M202 547v9M203 547v9M204 547v9M205 547v9M206 547v9M207 547v9M208 548v7M209 547v9M210 547v9M211 548v7M212 547v9M213 546v11M214 547v9M215 546v11M216 547v9M217 548v7M218 547v9M219 547v9M220 547v9M221 547v9M222 547v9M223 547v9M224 547v9M225 547v9M226 548v7M227 548v7M228 547v9M229 547v9M230 547v9M231 547v9M232 546v11M233 546v11M234 544v15M235 547v9M236 547v9M237 546v11M238 546v11M239 547v9M240 546v11M241 547v9M242 546v11M243 547v9M244 547v9M245 547v9M246 548v7M247 547v9M248 547v9M249 547v9M250 547v9M251 548v7M252 547v9M253 547v9M254 547v9M255 547v9M256 547v9M257 548v7M258 547v9M259 547v9M260 547v9M261 547v9M262 548v7M263 547v9M264 547v9M265 548v7M266 548v7M267 548v7M268 548v7M269 548v7M270 548v7M271 548v7M272 547v9M273 548v7M274 548v7M275 548v7M276 548v7M277 548v7M278 548v7M279 548v7M280 548v7M281 548v7M282 548v7M283 549v5M284 549v5M285 549v5M286 546v11M287 547v9M288 547v9M289 547v9M290 547v9M291 548v7M292 548v7M293 548v7M294 548v7M295 547v9M296 547v9M297 547v9M298 547v9M299 544v15M300 546v11M301 546v11M302 545v13M303 546v11M304 546v11M305 546v11M306 546v11M307 546v11M308 547v9M309 546v11M310 547v9M311 546v11M312 546v11M313 546v11M314 546v11M315 546v11M316 546v11M317 546v11M318 546v11M319 546v11M320 547v9M321 546v11M322 547v9M323 547v9M324 547v9M325 547v9M326 546v11M327 546v11M328 547v9M329 546v11M330 546v11M331 547v9M332 544v15M333 546v11M334 546v11M335 546v11M336 546v11M337 547v9M338 547v9M339 547v9M340 547v9M341 546v11M342 546v11M343 546v11M344 547v9M345 546v11M346 546v11M347 546v11M348 543v17M349 547v9M350 546v11M351 546v11M352 546v11M353 546v11M354 546v11M355 546v11M356 546v11M357 547v9M358 547v9M359 547v9M360 546v11M361 547v9M362 547v9M363 547v9M364 546v11M365 546v11M366 546v11M367 546v11M368 547v9M369 547v9M370 547v9M371 547v9M372 547v9M373 547v9M374 545v13M375 546v11M376 545v13M377 546v11M378 544v15M379 546v11M380 546v11M381 546v11M382 546v11M383 547v9M384 546v11M385 547v9M386 546v11M387 547v9M388 546v11M389 546v11M390 545v13M391 546v11M392 546v11M393 546v11M394 543v17M395 546v11M396 545v13M397 545v13M398 546v11M399 546v11M400 546v11M401 546v11M402 546v11M403 546v11M404 546v11M405 546v11M406 546v11M407 543v17M408 546v11M409 546v11M410 546v11M411 546v11M412 547v9M413 547v9M414 547v9M415 547v9M416 547v9M417 548v7M418 548v7M419 547v9M420 547v9M421 547v9M422 547v9M423 547v9M424 547v9M425 547v9M426 547v9M427 547v9M428 547v9M429 546v11M430 547v9M431 547v9M432 547v9M433 547v9M434 547v9M435 547v9M436 548v7M437 548v7M438 548v7M439 548v7M440 548v7M441 548v7M442 546v11M443 546v11M444 546v11M445 546v11M446 545v13M447 547v9M448 547v9M449 547v9M450 547v9M451 547v9M452 547v9M453 548v7M454 548v7M455 548v7M456 550v3M458 550v3M459 550v3M460 550v3M461 550v3M462 550v3M463 550v3M464 550v3M465 550v3M466 550v3M467 550v3M470 549v5M471 550v2M472 550v3M473 549v5M475 549v5M476 550v3M477 550v3M478 550v3M479 550v3M480 550v3M481 550v3M482 550v3M484 550v3M485 550v3M486 550v3M488 550v3M489 550v3M490 550v3M491 550v3M492 550v3M493 550v3M494 550v3M497 550v3M500 550v3M501 550v3M502 550v3M503 550v2M504 547v9M505 544v15M506 545v13M507 545v13M508 546v11M509 544v15M510 546v11M511 547v9M512 547v9M513 547v9M514 547v9M515 547v9M516 548v7M517 547v9M518 546v11M519 547v9M520 547v9M521 546v11M522 547v9M523 547v9M524 547v9M525 547v9M526 547v9M527 547v9M528 547v9M529 548v7M530 547v9M531 547v9M532 548v7M533 547v9M534 547v9M535 547v9M536 547v9M537 547v9M538 547v9M539 546v11M540 547v9M541 547v9M542 547v9M543 547v9M544 548v7M545 547v9M546 547v9M547 548v7M548 547v9M549 548v7M550 547v9M551 547v9M552 548v7M553 548v7M554 547v9M555 547v9M556 547v9M557 547v9M558 547v9M559 547v9M560 546v11M561 547v9M562 546v11M563 546v11M564 546v11M565 546v11M566 546v11M567 546v11M568 545v13M569 547v9M570 547v9M571 547v9M572 548v7M573 547v9M574 547v9M575 548v7M576 550v3M578 550v2M579 550v3M582 550v3M586 550v2M587 550v3M588 550v3M589 550v2M590 550v3M593 550v2M596 550v2M599 550v3M600 550v3M601 550v2M602 550v2M603 549v5M605 550v2M606 550v3M607 549v5M608 546v11M609 546v11M610 546v11M611 546v11M612 546v11M613 546v11M614 546v11M615 546v11M616 547v9M617 546v11M618 546v11M619 545v13M620 545v13M621 546v11M622 546v11M623 546v11M624 546v11M625 546v11M626 546v11M627 545v13M628 546v11M629 545v13M630 546v11M631 546v11M632 546v11M633 547v9M634 546v11M635 546v11M636 546v11M637 546v11M638 546v11M639 546v11M640 546v11M641 546v11M642 546v11M643 546v11M644 546v11M645 545v13M646 545v13M647 545v13M648 546v11M649 545v13M650 545v13M651 546v11M652 546v11M653 544v15M654 545v13M655 544v15M656 545v13M657 545v13M658 545v13M659 546v11M660 546v11M661 544v15M662 545v13M663 544v15M664 544v15M665 543v17M666 546v11M667 545v13M668 547v9M669 549v5M670 549v5M671 550v3M672 550v3M673 541v21M674 550v3M675 550v3M676 547v9M677 545v13M678 544v15M679 545v13M680 545v13M681 545v13M682 542v19M683 546v11M684 543v17M685 544v15M686 544v15M687 544v15M688 544v15M689 544v15M690 545v13M691 546v11M692 547v9M693 545v13M694 546v11M695 546v11M696 546v11M697 546v11M698 547v9M699 547v9M700 547v9M701 546v11M702 547v9M703 546v11M704 547v9M705 546v11M706 547v9M707 546v11M708 546v11M709 547v9M710 541v21M711 547v9M712 546v11M713 546v11M714 547v9M715 547v9M716 547v9M717 547v9M718 546v11M719 547v9M720 548v7M757 549v5M762 546v11M763 542v19M764 543v17M765 545v13M766 545v13M767 545v13M768 545v13M769 545v13M770 546v11M771 546v11M772 546v11M773 546v11M774 546v11M775 547v9M776 547v9M777 546v11M778 547v9M779 547v9M780 547v9M781 547v9M782 547v9M783 547v9M784 547v9M785 547v9M786 547v9M787 547v9M788 547v9M789 547v9M790 547v9M791 546v11M792 547v9M793 547v9M794 548v7M795 547v9M796 546v11M797 547v9M798 547v9M799 547v9M800 548v7M801 546v11M802 547v9M803 547v9M804 547v9M805 547v9M806 547v9M807 547v9M808 546v11M809 546v11M810 546v11M811 546v11M812 547v9M813 546v11M814 547v9M815 546v11M816 545v13M817 546v11M818 545v13M819 546v11M820 546v11M821 545v13M822 546v11M823 546v11M824 545v13M825 546v11M826 546v11M827 546v11M828 546v11M829 546v11M830 545v13M831 546v11M832 545v13M833 544v15M834 544v15M835 545v13M836 545v13M837 545v13M838 544v15M839 543v17M840 545v13M841 544v15M842 544v15M843 544v15M844 544v15M845 544v15M846 545v13M847 546v11M848 546v11M849 545v13M850 546v11M851 547v9M852 548v7M853 547v9M854 547v9M855 549v5M856 547v9M857 545v13M858 545v13M859 545v13M860 545v13M861 545v13M862 546v11M863 546v11M864 546v11M865 546v11M866 546v11M867 546v11M868 546v11M869 546v11M870 547v9M871 546v11M872 546v11M873 547v9M874 546v11M875 546v11M876 547v9M877 546v11M878 547v9M879 547v9M880 546v11M881 547v9M882 549v5M883 548v7M884 545v13M885 546v11M886 546v11M887 546v11M888 547v9M889 547v9M890 546v11M891 546v11M892 547v9M893 546v11M894 546v11M895 546v11M896 547v9M897 547v9M898 547v9M899 547v9M900 546v11M901 547v9M902 547v9M903 547v9M904 547v9M905 546v11M906 547v9M907 547v9M908 547v9M909 549v5M910 548v7M911 547v9M912 546v11M913 546v11M914 546v11M915 545v13M916 545v13M917 545v13M918 546v11M919 546v11M920 547v9M921 547v9M922 545v13M923 546v11M924 545v13M925 545v13M926 547v9M927 547v9M931 550v3M933 550v2M939 550v3M941 550v2M943 550v3M944 550v3M948 550v2M951 550v2M955 550v2M957 550v2M959 550v2M961 550v2M963 550v3M966 550v3M972 550v3M973 550v3M974 550v2M975 550v3M976 545v13M977 541v21M978 546v11M979 545v13M980 545v13M981 546v11M982 545v13M983 546v11M984 547v9M985 547v9M986 547v9M987 547v9M988 547v9M989 547v9M990 547v9M991 547v9M992 547v9M993 547v9M994 546v11M995 547v9M996 547v9M997 547v9M998 547v9M999 547v9M1000 548v7M1001 546v11M1002 547v9M1003 547v9M1004 547v9M1005 547v9M1006 548v7M1007 548v7M1008 548v7M1009 549v5M1010 550v3M1011 550v3M1013 550v3M1014 549v5M1015 546v11M1016 544v15M1017 547v9M1018 546v11M1019 546v11M1020 547v9M1021 547v9M1022 547v9M1023 547v9M1024 547v9M1025 547v9M1026 547v9M1027 547v9M1028 546v11M1029 546v11M1030 542v19M1031 546v11M1032 546v11M1033 546v11M1034 546v11M1035 546v11M1036 547v9M1037 547v9M1038 545v13M1039 546v11M1040 546v11M1041 541v21M1042 546v11M1043 546v11M1044 546v11M1045 545v13M1046 546v11M1047 546v11M1048 546v11M1049 546v11M1050 544v15M1051 546v11M1052 547v9M1053 547v9M1054 547v9M1055 547v9M1056 547v9M1057 547v9M1058 547v9M1059 548v7M1060 548v7M1061 547v9M1062 547v9M1063 548v7M1064 547v9M1065 548v7M1066 548v7M1067 546v11M1068 547v9M1069 547v9M1070 547v9M1071 547v9M1072 547v9M1073 547v9M1074 547v9M1075 547v9M1076 547v9M1077 546v11M1078 545v13M1079 547v9M1080 547v9M1081 547v9M1082 547v9M1083 547v9M1084 547v9M1085 547v9M1086 547v9M1087 546v11M1088 545v13M1089 547v9M1090 547v9M1091 548v7M1092 547v9M1093 547v9M1094 547v9M1095 548v7M1096 547v9M1097 547v9M1098 547v9M1099 547v9M1100 547v9M1101 542v19M1102 546v11M1103 546v11M1104 546v11M1105 547v9M1106 547v9M1107 547v9M1108 547v9M1109 545v13M1110 547v9M1111 547v9M1112 547v9M1113 547v9M1114 548v7M1115 548v7M1116 546v11M1117 547v9M1118 547v9M1119 547v9M1120 547v9M1121 544v15M1122 547v9M1123 547v9M1124 546v11M1125 547v9M1126 547v9M1127 547v9M1128 547v9M1129 547v9M1130 548v7M1131 548v7M1132 547v9M1133 548v7M1134 548v7M1135 548v7M1136 548v7M1137 548v7M1138 548v7M1139 547v9M1140 548v7M1141 548v7M1142 548v7M1143 548v7M1144 548v7M1145 548v7M1146 548v7M1147 548v7M1148 549v5M1149 549v5M1150 548v7M1151 548v7M1152 548v7M1153 549v5M1154 548v7M1155 548v7M1156 549v5M1157 549v5M1158 549v5M1159 549v5M1160 549v5M1161 549v5M1162 548v7M1167 550v3M1171 550v3M1172 550v3M1175 550v3M1178 550v3M1179 550v3M1183 550v2M1185 550v2M1188 550v3" stroke="#6464dc" stroke-width="1" fill="none" transform="translate(0.5 0)"/><path d="M127 697.5H1189" stroke="#3232c8" stroke-width="1" fill="none"/><path d="M127 685v23M128 689v24M129 687v23M130 691v16M131 689v20M132 687v17M133 685v25M134 658v79M135 683v34M136 688v27M137 628v139M138 669v53M139 690v15M140 695v5M141 695v5M142 695v6M143 696v3M144 694v7M145 695v5M146 695v5M147 695v5M148 695v5M149 676v43M150 668v59M151 664v66M152 668v65M153 666v58M154 666v62M155 669v58M156 678v41M157 694v7M158 695v5M159 690v15M160 696v3M161 695v5M162 695v5M163 696v3M164 695v5M165 695v5M166 695v6M167 696v3M168 691v13M169 694v7M170 695v5M171 695v5M172 696v3M173 695v5M174 695v5M175 696v3M176 695v5M177 695v6M178 695v4M179 695v5M180 696v3M181 694v6M182 695v5M183 695v5M184 695v4M185 677v39M186 657v78M187 645v108M188 675v46M189 647v116M190 663v96M191 671v54M192 659v86M193 668v57M194 671v47M195 680v40M196 680v33M197 676v41M198 666v75M199 655v66M200 675v55M201 671v55M202 678v39M203 663v62M204 672v52M205 675v61M206 668v45M207 670v45M208 681v42M209 684v39M210 677v34M211 684v27M212 665v67M213 663v66M214 679v40M215 670v77M216 677v43M217 675v47M218 680v34M219 683v40M220 666v53M221 653v68M222 667v59M223 675v46M224 670v46M225 678v47M226 672v43M227 679v38M228 674v46M229 667v55M230 678v41M231 674v47M232 674v62M233 669v54M234 647v99M235 677v40M236 682v35M237 660v74M238 654v78M239 678v34M240 666v60M241 675v44M242 678v40M243 679v49M244 679v48M245 669v59M246 671v48M247 668v51M248 679v38M249 659v68M250 680v50M251 683v38M252 661v57M253 670v52M254 678v37M255 681v29M256 653v72M257 680v38M258 660v66M259 667v49M260 670v52M261 679v37M262 674v39M263 677v41M264 670v50M265 665v58M266 682v45M267 681v36M268 683v38M269 680v36M270 682v30M271 673v46M272 666v50M273 677v48M274 673v39M275 683v27M276 681v26M277 662v71M278 675v40M279 676v37M280 680v40M281 683v31M282 687v27M283 687v22M284 683v31M285 684v25M286 655v80M287 674v47M288 683v29M289 675v63M290 667v51M291 663v56M292 672v44M293 674v41M294 672v43M295 682v35M296 675v38M297 680v42M298 682v32M299 652v97M300 675v52M301 671v63M302 668v60M303 659v87M304 651v80M305 659v79M306 669v52M307 671v52M308 677v48M309 670v50M310 667v68M311 645v82M312 641v85M313 671v53M314 661v88M315 674v57M316 666v61M317 675v56M318 654v78M319 659v83M320 666v60M321 670v55M322 677v47M323 676v48M324 677v44M325 676v41M326 674v46M327 668v82M328 674v51M329 673v63M330 677v43M331 672v43M332 652v102M333 647v80M334 651v78M335 665v55M336 673v55M337 676v43M338 674v48M339 676v44M340 667v50M341 668v56M342 667v60M343 675v57M344 659v69M345 677v52M346 652v75M347 680v40M348 631v121M349 661v67M350 654v75M351 644v103M352 670v63M353 671v52M354 670v67M355 668v50M356 671v56M357 667v65M358 670v59M359 677v41M360 653v89M361 672v56M362 661v56M363 682v36M364 658v66M365 657v82M366 673v61M367 676v55M368 668v50M369 662v59M370 670v48M371 680v35M372 675v54M373 675v43M374 662v71M375 653v91M376 667v60M377 657v79M378 652v96M379 673v51M380 669v64M381 671v56M382 663v71M383 663v65M384 661v58M385 668v54M386 663v55M387 675v44M388 666v55M389 679v43M390 655v109M391 667v82M392 667v64M393 677v52M394 642v117M395 678v42M396 653v113M397 666v63M398 668v66M399 667v67M400 663v77M401 666v59M402 677v62M403 679v37M404 662v80M405 647v98M406 660v65M407 638v113M408 663v56M409 673v47M410 654v77M411 663v77M412 662v58M413 661v62M414 677v39M415 675v40M416 672v41M417 679v42M418 679v32M419 682v44M420 679v55M421 676v53M422 671v44M423 667v49M424 669v48M425 680v35M426 680v43M427 668v48M428 680v34M429 660v69M430 665v68M431 682v38M432 686v27M433 677v41M434 668v56M435 675v42M436 670v61M437 677v41M438 683v43M439 681v32M440 676v34M441 681v31M442 671v57M443 674v68M444 652v73M445 671v49M446 652v87M447 679v48M448 679v37M449 671v47M450 684v28M451 665v55M452 659v77M453 665v54M454 684v28M455 676v38M456 690v14M457 696v3M458 695v5M459 695v5M460 694v7M461 695v5M462 694v7M463 695v5M464 695v5M465 695v5M466 695v5M467 689v17M468 696v3M469 696v3M470 687v21M471 695v4M472 694v6M473 687v21M474 696v3M475 683v30M476 694v7M477 694v6M478 694v7M479 695v5M480 694v7M481 695v5M482 695v5M483 696v3M484 694v7M485 695v5M486 695v5M487 696v3M488 694v7M489 695v5M490 691v13M491 694v7M492 694v7M493 694v7M494 694v6M495 696v3M496 696v3M497 694v6M498 696v3M499 696v3M500 695v5M501 695v5M502 695v5M503 695v4M504 679v34M505 654v96M506 673v50M507 679v39M508 669v46M509 654v87M510 675v42M511 679v54M512 669v53M513 684v33M514 684v35M515 686v27M516 680v31M517 683v30M518 671v60M519 678v38M520 681v38M521 663v66M522 679v49M523 667v62M524 673v42M525 680v32M526 670v42M527 674v50M528 681v42M529 671v39M530 683v42M531 683v43M532 679v32M533 676v35M534 683v27M535 677v34M536 672v43M537 678v43M538 680v30M539 669v58M540 668v45M541 672v51M542 684v35M543 681v35M544 683v30M545 682v44M546 661v69M547 675v35M548 678v31M549 687v26M550 676v44M551 681v43M552 672v38M553 687v21M554 658v63M555 677v38M556 684v29M557 684v34M558 660v59M559 658v78M560 674v55M561 657v71M562 665v66M563 680v49M564 672v50M565 679v35M566 677v55M567 654v96M568 656v84M569 668v55M570 674v42M571 684v39M572 677v36M573 675v62M574 684v27M575 685v24M576 691v12M577 696v3M578 695v4M579 695v5M580 696v3M581 696v3M582 695v5M583 696v3M584 696v3M585 696v3M586 695v4M587 695v5M588 692v11M589 695v4M590 692v11M591 696v3M592 696v3M593 695v4M594 696v3M595 696v3M596 695v4M597 696v3M598 696v3M599 695v5M600 695v5M601 695v4M602 695v4M603 683v27M604 696v3M605 695v4M606 695v5M607 692v11M608 664v64M609 665v64M610 667v52M611 680v35M612 679v35M613 648v81M614 677v41M615 650v96M616 681v44M617 683v29M618 673v39M619 666v57M620 656v80M621 669v48M622 675v40M623 671v47M624 682v32M625 679v36M626 670v45M627 654v66M628 667v77M629 656v85M630 668v54M631 662v53M632 662v81M633 672v52M634 667v55M635 675v41M636 675v39M637 671v54M638 665v49M639 666v58M640 671v52M641 676v41M642 665v49M643 682v43M644 675v43M645 664v72M646 674v57M647 654v85M648 671v63M649 667v55M650 671v45M651 678v51M652 668v53M653 649v94M654 662v66M655 670v53M656 674v54M657 662v81M658 661v68M659 671v48M660 674v47M661 641v97M662 679v36M663 644v106M664 650v71M665 645v103M666 673v42M667 661v92M668 667v59M669 690v16M670 687v23M671 691v17M672 689v16M673 628v139M674 692v13M675 688v18M676 682v31M677 657v79M678 673v55M679 655v68M680 664v62M681 676v55M682 632v123M683 677v46M684 652v98M685 666v70M686 660v83M687 640v106M688 671v58M689 646v98M690 676v47M691 678v57M692 682v39M693 663v77M694 674v52M695 655v71M696 673v47M697 659v62M698 678v42M699 683v33M700 671v49M701 676v42M702 679v42M703 673v46M704 675v47M705 654v74M706 655v64M707 673v55M708 668v59M709 681v34M710 628v139M711 670v46M712 659v79M713 670v46M714 668v46M715 681v31M716 672v42M717 679v37M718 663v70M719 677v46M720 685v37M721 696v3M722 696v3M723 696v2M724 696v3M725 696v3M726 696v3M727 696v3M728 696v3M729 696v3M730 696v2M732 696v3M733 696v3M734 696v3M735 696v3M736 696v3M737 696v3M738 696v3M739 696v3M740 696v3M741 696v3M742 696v3M743 696v3M744 696v3M745 696v3M746 696v3M747 696v3M748 696v3M749 696v3M750 696v3M751 696v2M752 696v3M753 696v3M754 696v3M755 696v2M756 696v3M757 682v31M758 696v3M759 696v3M760 696v3M761 696v3M762 668v51M763 638v121M764 663v86M765 657v94M766 663v82M767 663v76M768 646v94M769 675v59M770 672v68M771 658v59M772 676v55M773 667v60M774 679v49M775 667v57M776 678v40M777 673v49M778 668v46M779 671v55M780 675v36M781 672v45M782 677v40M783 672v41M784 670v52M785 674v50M786 675v42M787 680v46M788 683v30M789 663v53M790 683v28M791 676v44M792 673v44M793 684v36M794 683v25M795 671v62M796 661v62M797 679v36M798 679v40M799 675v34M800 680v29M801 664v58M802 662v60M803 678v42M804 673v50M805 680v36M806 676v41M807 685v35M808 664v74M809 666v61M810 675v65M811 669v48M812 678v54M813 663v56M814 663v51M815 660v72M816 668v60M817 650v82M818 662v57M819 670v50M820 681v40M821 669v52M822 678v38M823 681v37M824 664v61M825 671v55M826 664v53M827 672v45M828 677v39M829 665v65M830 670v50M831 677v56M832 667v55M833 643v98M834 657v82M835 655v69M836 657v92M837 674v60M838 666v56M839 646v107M840 668v54M841 658v81M842 656v71M843 665v64M844 649v106M845 665v80M846 675v64M847 670v50M848 667v48M849 669v49M850 681v37M851 680v33M852 678v31M853 673v56M854 667v50M855 690v17M856 667v65M857 655v81M858 653v70M859 654v93M860 656v81M861 663v71M862 673v43M863 666v64M864 672v43M865 659v59M866 661v71M867 675v43M868 668v65M869 678v52M870 677v50M871 680v37M872 668v54M873 680v36M874 665v56M875 683v29M876 685v24M877 675v44M878 676v54M879 681v36M880 673v45M881 676v43M882 689v18M883 682v27M884 656v95M885 679v44M886 681v42M887 676v44M888 680v40M889 676v38M890 651v82M891 667v51M892 670v52M893 665v63M894 668v51M895 675v55M896 678v49M897 679v34M898 679v39M899 672v43M900 659v66M901 672v46M902 676v52M903 683v40M904 683v37M905 673v50M906 671v52M907 684v31M908 679v36M909 686v20M910 688v21M911 667v48M912 678v45M913 661v71M914 677v36M915 654v82M916 662v70M917 661v64M918 660v67M919 673v42M920 680v39M921 684v29M922 662v59M923 678v40M924 658v74M925 672v46M926 677v36M927 678v44M928 696v3M929 696v3M930 696v3M931 695v5M932 696v3M933 695v4M934 696v3M935 696v3M936 696v3M937 696v3M938 696v3M939 695v5M940 696v3M941 695v4M942 696v3M943 695v5M944 695v5M945 696v3M946 696v3M947 696v3M948 695v4M949 696v3M950 696v3M951 695v4M952 696v3M953 696v3M954 696v3M955 695v4M956 696v3M957 695v4M958 696v3M959 695v4M960 696v3M961 695v4M962 696v3M963 695v5M964 696v3M965 696v3M966 695v5M967 696v3M968 696v3M969 696v3M970 696v3M971 696v3M972 695v5M973 695v5M974 695v4M975 695v6M976 671v52M977 631v135M978 678v49M979 661v90M980 643v98M981 654v78M982 674v55M983 673v51M984 679v47M985 667v57M986 683v28M987 684v28M988 679v37M989 676v54M990 683v32M991 681v41M992 678v41M993 680v44M994 668v50M995 672v43M996 677v53M997 682v45M998 674v41M999 677v33M1000 679v31M1001 673v54M1002 667v57M1003 672v48M1004 680v40M1005 669v50M1006 679v36M1007 685v29M1008 679v34M1009 690v21M1010 695v5M1011 694v6M1012 696v3M1013 694v7M1014 678v37M1015 673v68M1016 645v101M1017 678v39M1018 650v78M1019 675v63M1020 656v69M1021 663v56M1022 677v40M1023 661v63M1024 678v46M1025 669v58M1026 679v54M1027 665v70M1028 658v67M1029 659v77M1030 639v119M1031 658v81M1032 678v40M1033 681v40M1034 663v81M1035 650v74M1036 673v47M1037 671v46M1038 650v76M1039 670v58M1040 655v69M1041 628v139M1042 673v47M1043 672v69M1044 663v68M1045 663v73M1046 649v90M1047 661v87M1048 647v78M1049 665v58M1050 639v107M1051 649v97M1052 677v48M1053 651v73M1054 662v61M1055 672v58M1056 662v62M1057 678v49M1058 680v35M1059 673v49M1060 675v45M1061 672v44M1062 672v45M1063 669v55M1064 684v27M1065 673v37M1066 681v37M1067 650v81M1068 676v49M1069 671v45M1070 677v46M1071 675v36M1072 664v58M1073 666v65M1074 675v43M1075 660v75M1076 671v75M1077 644v83M1078 647v94M1079 667v61M1080 657v62M1081 678v51M1082 669v47M1083 676v38M1084 682v45M1085 677v37M1086 675v40M1087 647v78M1088 654v90M1089 670v47M1090 679v39M1091 682v43M1092 658v75M1093 660v75M1094 676v54M1095 663v65M1096 661v63M1097 680v48M1098 680v34M1099 671v55M1100 680v33M1101 636v129M1102 643v109M1103 672v75M1104 651v77M1105 673v52M1106 654v81M1107 650v103M1108 679v45M1109 655v92M1110 661v64M1111 676v42M1112 670v44M1113 673v52M1114 681v42M1115 680v30M1116 652v94M1117 651v81M1118 664v73M1119 664v69M1120 659v92M1121 647v102M1122 668v49M1123 681v30M1124 646v98M1125 674v47M1126 650v73M1127 678v39M1128 677v58M1129 666v57M1130 671v51M1131 680v36M1132 674v45M1133 677v41M1134 684v31M1135 673v57M1136 683v41M1137 674v42M1138 682v32M1139 680v36M1140 674v43M1141 684v26M1142 677v46M1143 675v47M1144 683v36M1145 684v27M1146 684v32M1147 686v24M1148 686v24M1149 683v26M1150 673v54M1151 666v56M1152 680v38M1153 683v31M1154 680v32M1155 684v32M1156 685v31M1157 686v21M1158 688v26M1159 684v32M1160 679v29M1161 687v21M1162 669v50M1163 696v3M1164 696v3M1165 696v3M1166 696v3M1167 689v17M1168 696v3M1169 696v3M1170 696v3M1171 695v5M1172 695v5M1173 696v3M1174 696v3M1175 695v5M1176 696v3M1177 696v3M1178 695v5M1179 695v5M1180 696v3M1181 696v3M1182 696v3M1183 695v4M1184 696v3M1185 695v4M1186 696v3M1187 696v3M1188 687v21" stroke="#3232c8" stroke-width="1" fill="none" transform="translate(0.5 0)"/><path d="M127 694v7M128 694v7M129 695v5M130 695v5M131 695v5M132 694v7M133 693v9M134 691v13M135 693v9M136 694v7M137 687v21M138 693v9M139 695v5M140 696v3M141 696v3M142 696v3M144 696v3M145 696v3M146 696v3M147 696v3M148 696v3M149 694v7M150 693v9M151 692v11M152 692v11M153 693v9M154 692v11M155 693v9M156 694v7M157 696v3M158 696v3M159 696v3M161 696v3M162 696v3M164 696v3M165 696v3M166 696v3M168 696v3M169 696v3M170 696v3M171 696v3M173 696v3M174 696v3M176 696v3M177 696v3M178 696v2M179 696v3M181 696v3M182 696v3M183 696v3M184 696v2M185 694v7M186 691v13M187 689v17M188 692v11M189 691v13M190 691v13M191 691v13M192 691v13M193 692v11M194 693v9M195 693v9M196 693v9M197 693v9M198 693v9M199 692v11M200 693v9M201 693v9M202 693v9M203 693v9M204 693v9M205 693v9M206 693v9M207 693v9M208 694v7M209 693v9M210 693v9M211 694v7M212 693v9M213 692v11M214 693v9M215 692v11M216 693v9M217 694v7M218 693v9M219 693v9M220 693v9M221 693v9M222 693v9M223 693v9M224 693v9M225 693v9M226 694v7M227 694v7M228 693v9M229 693v9M230 693v9M231 693v9M232 692v11M233 692v11M234 690v15M235 693v9M236 693v9M237 692v11M238 692v11M239 693v9M240 692v11M241 693v9M242 692v11M243 693v9M244 693v9M245 693v9M246 694v7M247 693v9M248 693v9M249 693v9M250 693v9M251 694v7M252 693v9M253 693v9M254 693v9M255 693v9M256 693v9M257 694v7M258 693v9M259 693v9M260 693v9M261 693v9M262 694v7M263 693v9M264 693v9M265 694v7M266 694v7M267 694v7M268 694v7M269 694v7M270 694v7M271 694v7M272 693v9M273 694v7M274 694v7M275 694v7M276 694v7M277 694v7M278 694v7M279 694v7M280 694v7M281 694v7M282 694v7M283 695v5M284 695v5M285 695v5M286 692v11M287 693v9M288 693v9M289 693v9M290 693v9M291 694v7M292 694v7M293 694v7M294 694v7M295 693v9M296 693v9M297 693v9M298 693v9M299 690v15M300 692v11M301 692v11M302 691v13M303 692v11M304 692v11M305 692v11M306 692v11M307 692v11M308 693v9M309 692v11M310 693v9M311 692v11M312 692v11M313 692v11M314 692v11M315 692v11M316 692v11M317 692v11M318 692v11M319 692v11M320 693v9M321 692v11M322 693v9M323 693v9M324 693v9M325 693v9M326 692v11M327 692v11M328 693v9M329 692v11M330 692v11M331 693v9M332 690v15M333 692v11M334 692v11M335 692v11M336 692v11M337 693v9M338 693v9M339 693v9M340 693v9M341 692v11M342 692v11M343 692v11M344 693v9M345 692v11M346 692v11M347 692v11M348 689v17M349 693v9M350 692v11M351 692v11M352 692v11M353 692v11M354 692v11M355 692v11M356 692v11M357 693v9M358 693v9M359 693v9M360 692v11M361 693v9M362 693v9M363 693v9M364 692v11M365 692v11M366 692v11M367 692v11M368 693v9M369 693v9M370 693v9M371 693v9M372 693v9M373 693v9M374 691v13M375 692v11M376 691v13M377 692v11M378 690v15M379 692v11M380 692v11M381 692v11M382 692v11M383 693v9M384 692v11M385 693v9M386 692v11M387 693v9M388 692v11M389 692v11M390 691v13M391 692v11M392 692v11M393 692v11M394 689v17M395 692v11M396 691v13M397 691v13M398 692v11M399 692v11M400 692v11M401 692v11M402 692v11M403 692v11M404 692v11M405 692v11M406 692v11M407 689v17M408 692v11M409 692v11M410 692v11M411 692v11M412 693v9M413 693v9M414 693v9M415 693v9M416 693v9M417 694v7M418 694v7M419 693v9M420 693v9M421 693v9M422 693v9M423 693v9M424 693v9M425 693v9M426 693v9M427 693v9M428 693v9M429 692v11M430 693v9M431 693v9M432 693v9M433 693v9M434 693v9M435 693v9M436 694v7M437 694v7M438 694v7M439 694v7M440 694v7M441 694v7M442 692v11M443 692v11M444 692v11M445 692v11M446 691v13M447 693v9M448 693v9M449 693v9M450 693v9M451 693v9M452 693v9M453 694v7M454 694v7M455 694v7M456 696v3M458 696v3M459 696v3M460 696v3M461 696v3M462 696v3M463 696v3M464 696v3M465 696v3M466 696v3M467 696v3M470 695v5M471 696v2M472 696v3M473 695v5M475 695v5M476 696v3M477 696v3M478 696v3M479 696v3M480 696v3M481 696v3M482 696v3M484 696v3M485 696v3M486 696v3M488 696v3M489 696v3M490 696v3M491 696v3M492 696v3M493 696v3M494 696v3M497 696v3M500 696v3M501 696v3M502 696v3M503 696v2M504 693v9M505 690v15M506 691v13M507 691v13M508 692v11M509 690v15M510 692v11M511 693v9M512 693v9M513 693v9M514 693v9M515 693v9M516 694v7M517 693v9M518 692v11M519 693v9M520 693v9M521 692v11M522 693v9M523 693v9M524 693v9M525 693v9M526 693v9M527 693v9M528 693v9M529 694v7M530 693v9M531 693v9M532 694v7M533 693v9M534 693v9M535 693v9M536 693v9M537 693v9M538 693v9M539 692v11M540 693v9M541 693v9M542 693v9M543 693v9M544 694v7M545 693v9M546 693v9M547 694v7M548 693v9M549 694v7M550 693v9M551 693v9M552 694v7M553 694v7M554 693v9M555 693v9M556 693v9M557 693v9M558 693v9M559 693v9M560 692v11M561 693v9M562 692v11M563 692v11M564 692v11M565 692v11M566 692v11M567 692v11M568 691v13M569 693v9M570 693v9M571 693v9M572 694v7M573 693v9M574 693v9M575 694v7M576 696v3M578 696v2M579 696v3M582 696v3M586 696v2M587 696v3M588 696v3M589 696v2M590 696v3M593 696v2M596 696v2M599 696v3M600 696v3M601 696v2M602 696v2M603 695v5M605 696v2M606 696v3M607 695v5M608 692v11M609 692v11M610 692v11M611 692v11M612 692v11M613 692v11M614 692v11M615 692v11M616 693v9M617 692v11M618 692v11M619 691v13M620 691v13M621 692v11M622 692v11M623 692v11M624 692v11M625 692v11M626 692v11M627 691v13M628 692v11M629 691v13M630 692v11M631 692v11M632 692v11M633 693v9M634 692v11M635 692v11M636 692v11M637 692v11M638 692v11M639 692v11M640 692v11M641 692v11M642 692v11M643 692v11M644 692v11M645 691v13M646 691v13M647 691v13M648 692v11M649 691v13M650 691v13M651 692v11M652 692v11M653 690v15M654 691v13M655 690v15M656 691v13M657 691v13M658 691v13M659 692v11M660 692v11M661 690v15M662 691v13M663 690v15M664 690v15M665 689v17M666 692v11M667 691v13M668 693v9M669 695v5M670 695v5M671 696v3M672 696v3M673 687v21M674 696v3M675 696v3M676 693v9M677 691v13M678 690v15M679 691v13M680 691v13M681 691v13M682 688v19M683 692v11M684 689v17M685 690v15M686 690v15M687 690v15M688 690v15M689 690v15M690 691v13M691 692v11M692 693v9M693 691v13M694 692v11M695 692v11M696 692v11M697 692v11M698 693v9M699 693v9M700 693v9M701 692v11M702 693v9M703 692v11M704 693v9M705 692v11M706 693v9M707 692v11M708 692v11M709 693v9M710 687v21M711 693v9M712 692v11M713 692v11M714 693v9M715 693v9M716 693v9M717 693v9M718 692v11M719 693v9M720 694v7M757 695v5M762 692v11M763 688v19M764 689v17M765 691v13M766 691v13M767 691v13M768 691v13M769 691v13M770 692v11M771 692v11M772 692v11M773 692v11M774 692v11M775 693v9M776 693v9M777 692v11M778 693v9M779 693v9M780 693v9M781 693v9M782 693v9M783 693v9M784 693v9M785 693v9M786 693v9M787 693v9M788 693v9M789 693v9M790 693v9M791 692v11M792 693v9M793 693v9M794 694v7M795 693v9M796 692v11M797 693v9M798 693v9M799 693v9M800 694v7M801 692v11M802 693v9M803 693v9M804 693v9M805 693v9M806 693v9M807 693v9M808 692v11M809 692v11M810 692v11M811 692v11M812 693v9M813 692v11M814 693v9M815 692v11M816 691v13M817 692v11M818 691v13M819 692v11M820 692v11M821 691v13M822 692v11M823 692v11M824 691v13M825 692v11M826 692v11M827 692v11M828 692v11M829 692v11M830 691v13M831 692v11M832 691v13M833 690v15M834 690v15M835 691v13M836 691v13M837 691v13M838 690v15M839 689v17M840 691v13M841 690v15M842 690v15M843 690v15M844 690v15M845 690v15M846 691v13M847 692v11M848 692v11M849 691v13M850 692v11M851 693v9M852 694v7M853 693v9M854 693v9M855 695v5M856 693v9M857 691v13M858 691v13M859 691v13M860 691v13M861 691v13M862 692v11M863 692v11M864 692v11M865 692v11M866 692v11M867 692v11M868 692v11M869 692v11M870 693v9M871 692v11M872 692v11M873 693v9M874 692v11M875 692v11M876 693v9M877 692v11M878 693v9M879 693v9M880 692v11M881 693v9M882 695v5M883 694v7M884 691v13M885 692v11M886 692v11M887 692v11M888 693v9M889 693v9M890 692v11M891 692v11M892 693v9M893 692v11M894 692v11M895 692v11M896 693v9M897 693v9M898 693v9M899 693v9M900 692v11M901 693v9M902 693v9M903 693v9M904 693v9M905 692v11M906 693v9M907 693v9M908 693v9M909 695v5M910 694v7M911 693v9M912 692v11M913 692v11M914 692v11M915 691v13M916 691v13M917 691v13M918 692v11M919 692v11M920 693v9M921 693v9M922 691v13M923 692v11M924 691v13M925 691v13M926 693v9M927 693v9M931 696v3M933 696v2M939 696v3M941 696v2M943 696v3M944 696v3M948 696v2M951 696v2M955 696v2M957 696v2M959 696v2M961 696v2M963 696v3M966 696v3M972 696v3M973 696v3M974 696v2M975 696v3M976 691v13M977 687v21M978 692v11M979 691v13M980 691v13M981 692v11M982 691v13M983 692v11M984 693v9M985 693v9M986 693v9M987 693v9M988 693v9M989 693v9M990 693v9M991 693v9M992 693v9M993 693v9M994 692v11M995 693v9M996 693v9M997 693v9M998 693v9M999 693v9M1000 694v7M1001 692v11M1002 693v9M1003 693v9M1004 693v9M1005 693v9M1006 694v7M1007 694v7M1008 694v7M1009 695v5M1010 696v3M1011 696v3M1013 696v3M1014 695v5M1015 692v11M1016 690v15M1017 693v9M1018 692v11M1019 692v11M1020 693v9M1021 693v9M1022 693v9M1023 693v9M1024 693v9M1025 693v9M1026 693v9M1027 693v9M1028 692v11M1029 692v11M1030 688v19M1031 692v11M1032 692v11M1033 692v11M1034 692v11M1035 692v11M1036 693v9M1037 693v9M1038 691v13M1039 692v11M1040 692v11M1041 687v21M1042 692v11M1043 692v11M1044 692v11M1045 691v13M1046 692v11M1047 692v11M1048 692v11M1049 692v11M1050 690v15M1051 692v11M1052 693v9M1053 693v9M1054 693v9M1055 693v9M1056 693v9M1057 693v9M1058 693v9M1059 694v7M1060 694v7M1061 693v9M1062 693v9M1063 694v7M1064 693v9M1065 694v7M1066 694v7M1067 692v11M1068 693v9M1069 693v9M1070 693v9M1071 693v9M1072 693v9M1073 693v9M1074 693v9M1075 693v9M1076 693v9M1077 692v11M1078 691v13M1079 693v9M1080 693v9M1081 693v9M1082 693v9M1083 693v9M1084 693v9M1085 693v9M1086 693v9M1087 692v11M1088 691v13M1089 693v9M1090 693v9M1091 694v7M1092 693v9M1093 693v9M1094 693v9M1095 694v7M1096 693v9M1097 693v9M1098 693v9M1099 693v9M1100 693v9M1101 688v19M1102 692v11M1103 692v11M1104 692v11M1105 693v9M1106 693v9M1107 693v9M1108 693v9M1109 691v13M1110 693v9M1111 693v9M1112 693v9M1113 693v9M1114 694v7M1115 694v7M1116 692v11M1117 693v9M1118 693v9M1119 693v9M1120 693v9M1121 690v15M1122 693v9M1123 693v9M1124 692v11M1125 693v9M1126 693v9M1127 693v9M1128 693v9M1129 693v9M1130 694v7M1131 694v7M1132 693v9M1133 694v7M1134 694v7M1135 694v7M1136 694v7M1137 694v7M1138 694v7M1139 693v9M1140 694v7M1141 694v7M1142 694v7M1143 694v7M1144 694v7M1145 694v7M1146 694v7M1147 694v7M1148 695v5M1149 695v5M1150 694v7M1151 694v7M1152 694v7M1153 695v5M1154 694v7M1155 694v7M1156 695v5M1157 695v5M1158 695v5M1159 695v5M1160 695v5M1161 695v5M1162 694v7M1167 696v3M1171 696v3M1172 696v3M1175 696v3M1178 696v3M1179 696v3M1183 696v2M1185 696v2M1188 696v3" stroke="#6464dc" stroke-width="1" fill="none" transform="translate(0.5 0)"/></svg>
</div>
</body>
</html>
